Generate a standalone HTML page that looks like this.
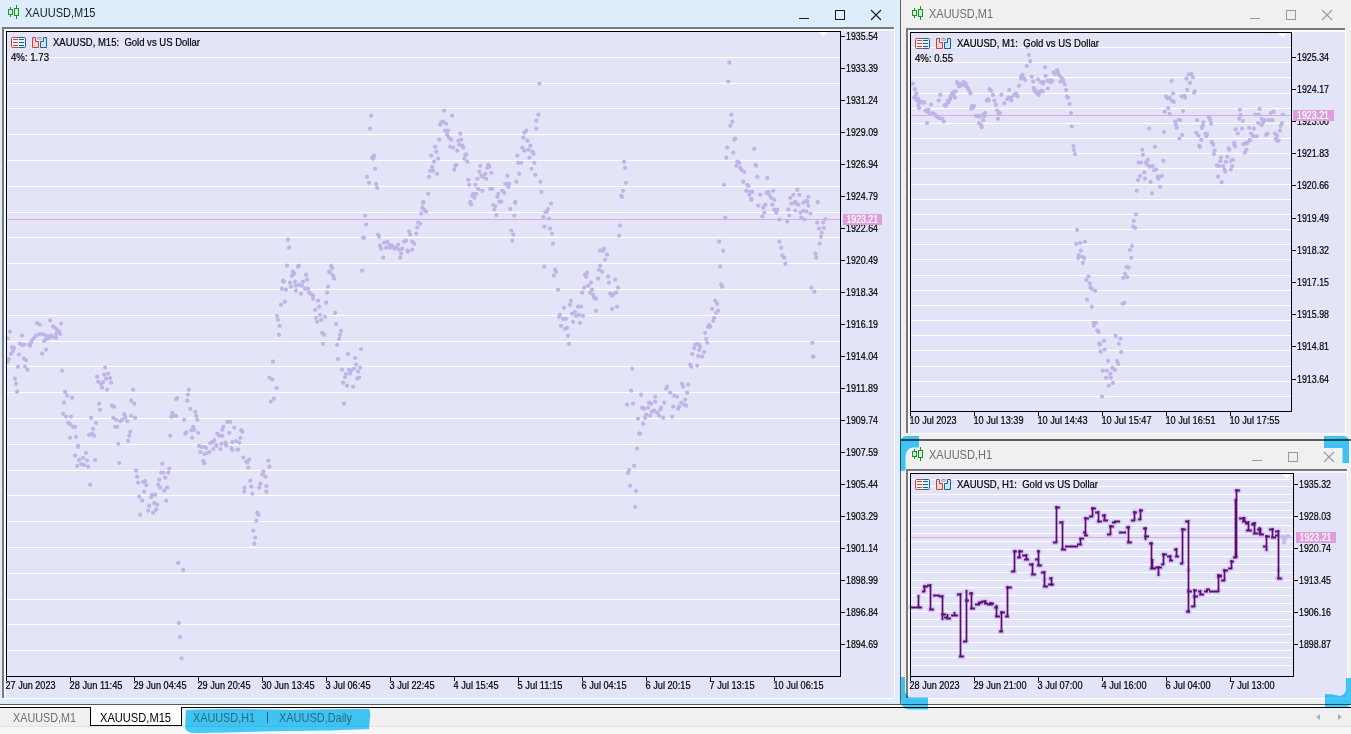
<!DOCTYPE html><html><head><meta charset="utf-8"><style>html,body{margin:0;padding:0;width:1351px;height:734px;overflow:hidden;background:#f0f0f0} svg{display:block} text{font-family:"Liberation Sans",sans-serif}</style></head><body>
<svg width="1351" height="734" viewBox="0 0 1351 734">
<rect x="0" y="0" width="1351" height="734" fill="#f0f0f0" />
<rect x="0" y="0" width="900" height="704" fill="#deedfb" />
<rect x="900" y="0" width="1" height="705" fill="#5c5c5c" />
<rect x="0" y="704" width="901" height="1" fill="#5c5c5c" />
<g shape-rendering="crispEdges">
<rect x="10" y="7" width="1" height="10" fill="#1f8f2f" />
<rect x="8" y="9" width="5" height="6" fill="#1f8f2f" />
<rect x="9" y="10" width="3" height="4" fill="#c9f7c9" />
<rect x="16" y="5" width="1" height="14" fill="#1f8f2f" />
<rect x="14" y="8" width="5" height="8" fill="#1f8f2f" />
<rect x="15" y="9" width="3" height="6" fill="#c9f7c9" />
</g>
<text x="25" y="17" font-size="12" fill="#1a1a2a" textLength="70.5" lengthAdjust="spacingAndGlyphs"  xml:space="preserve">XAUUSD,M15</text>
<g shape-rendering="crispEdges">
<rect x="799" y="18" width="10" height="1" fill="#1a1a1a" />
<rect x="835.5" y="10.5" width="9" height="9" fill="none" stroke="#1a1a1a" stroke-width="1"/>
</g>
<path d="M871 10 L881 20 M881 10 L871 20" stroke="#1a1a1a" stroke-width="1.1" fill="none"/>
<g shape-rendering="crispEdges">
<rect x="2" y="27" width="893" height="672" fill="#ffffff" />
<rect x="2" y="27" width="892" height="2" fill="#7a7a7a" />
<rect x="2" y="27" width="2" height="671" fill="#7a7a7a" />
<rect x="4" y="29" width="890" height="669" fill="#e4e4f8" />
<rect x="4" y="29" width="890" height="2" fill="#f7f7ff" />
<rect x="4" y="29" width="2" height="669" fill="#f7f7ff" />
</g>
<g shape-rendering="crispEdges">
<rect x="7" y="57" width="833" height="1" fill="#ffffff" />
<rect x="7" y="83" width="833" height="1" fill="#ffffff" />
<rect x="7" y="108" width="833" height="1" fill="#ffffff" />
<rect x="7" y="134" width="833" height="1" fill="#ffffff" />
<rect x="7" y="160" width="833" height="1" fill="#ffffff" />
<rect x="7" y="186" width="833" height="1" fill="#ffffff" />
<rect x="7" y="212" width="833" height="1" fill="#ffffff" />
<rect x="7" y="237" width="833" height="1" fill="#ffffff" />
<rect x="7" y="263" width="833" height="1" fill="#ffffff" />
<rect x="7" y="289" width="833" height="1" fill="#ffffff" />
<rect x="7" y="315" width="833" height="1" fill="#ffffff" />
<rect x="7" y="341" width="833" height="1" fill="#ffffff" />
<rect x="7" y="366" width="833" height="1" fill="#ffffff" />
<rect x="7" y="392" width="833" height="1" fill="#ffffff" />
<rect x="7" y="418" width="833" height="1" fill="#ffffff" />
<rect x="7" y="444" width="833" height="1" fill="#ffffff" />
<rect x="7" y="470" width="833" height="1" fill="#ffffff" />
<rect x="7" y="495" width="833" height="1" fill="#ffffff" />
<rect x="7" y="521" width="833" height="1" fill="#ffffff" />
<rect x="7" y="547" width="833" height="1" fill="#ffffff" />
<rect x="7" y="573" width="833" height="1" fill="#ffffff" />
<rect x="7" y="599" width="833" height="1" fill="#ffffff" />
<rect x="7" y="624" width="833" height="1" fill="#ffffff" />
<rect x="7" y="650" width="833" height="1" fill="#ffffff" />
</g>
<rect x="7" y="219" width="833" height="1" fill="#e0a8dc" />
<path d="M819 32 L828 32 L823.5 37 Z" fill="#ffffff" opacity="0.85"/>
<g fill="#bcb5e6">
<circle cx="10.0" cy="331.6" r="2.1"/>
<circle cx="7.6" cy="338.5" r="2.1"/>
<circle cx="22.0" cy="335.6" r="2.1"/>
<circle cx="37.0" cy="323.0" r="2.1"/>
<circle cx="39.6" cy="324.6" r="2.1"/>
<circle cx="50.1" cy="320.6" r="2.1"/>
<circle cx="61.1" cy="323.6" r="2.1"/>
<circle cx="53.1" cy="326.4" r="2.1"/>
<circle cx="55.1" cy="328.0" r="2.1"/>
<circle cx="57.1" cy="330.0" r="2.1"/>
<circle cx="59.1" cy="331.6" r="2.1"/>
<circle cx="60.1" cy="334.0" r="2.1"/>
<circle cx="36.0" cy="335.6" r="2.1"/>
<circle cx="39.0" cy="334.4" r="2.1"/>
<circle cx="42.1" cy="334.0" r="2.1"/>
<circle cx="45.1" cy="335.0" r="2.1"/>
<circle cx="48.1" cy="336.1" r="2.1"/>
<circle cx="51.1" cy="335.6" r="2.1"/>
<circle cx="49.1" cy="338.1" r="2.1"/>
<circle cx="46.1" cy="339.1" r="2.1"/>
<circle cx="44.1" cy="341.1" r="2.1"/>
<circle cx="53.1" cy="337.1" r="2.1"/>
<circle cx="56.1" cy="337.7" r="2.1"/>
<circle cx="56.1" cy="334.0" r="2.1"/>
<circle cx="34.0" cy="338.1" r="2.1"/>
<circle cx="32.0" cy="340.1" r="2.1"/>
<circle cx="31.0" cy="343.1" r="2.1"/>
<circle cx="30.0" cy="345.7" r="2.1"/>
<circle cx="29.0" cy="344.5" r="2.1"/>
<circle cx="20.0" cy="343.7" r="2.1"/>
<circle cx="22.0" cy="345.1" r="2.1"/>
<circle cx="24.0" cy="344.5" r="2.1"/>
<circle cx="12.0" cy="347.1" r="2.1"/>
<circle cx="14.0" cy="348.1" r="2.1"/>
<circle cx="13.0" cy="351.1" r="2.1"/>
<circle cx="11.0" cy="353.7" r="2.1"/>
<circle cx="9.0" cy="359.1" r="2.1"/>
<circle cx="7.6" cy="362.1" r="2.1"/>
<circle cx="19.0" cy="354.5" r="2.1"/>
<circle cx="24.0" cy="358.7" r="2.1"/>
<circle cx="26.0" cy="360.1" r="2.1"/>
<circle cx="42.1" cy="353.7" r="2.1"/>
<circle cx="46.1" cy="349.7" r="2.1"/>
<circle cx="18.0" cy="366.7" r="2.1"/>
<circle cx="25.0" cy="366.7" r="2.1"/>
<circle cx="27.6" cy="369.7" r="2.1"/>
<circle cx="15.0" cy="378.7" r="2.1"/>
<circle cx="16.0" cy="383.7" r="2.1"/>
<circle cx="17.0" cy="391.7" r="2.1"/>
<circle cx="62.1" cy="370.7" r="2.1"/>
<circle cx="65.1" cy="391.7" r="2.1"/>
<circle cx="67.1" cy="395.7" r="2.1"/>
<circle cx="72.1" cy="397.7" r="2.1"/>
<circle cx="64.1" cy="402.7" r="2.1"/>
<circle cx="63.1" cy="413.8" r="2.1"/>
<circle cx="66.1" cy="416.6" r="2.1"/>
<circle cx="71.1" cy="416.6" r="2.1"/>
<circle cx="68.1" cy="422.8" r="2.1"/>
<circle cx="70.1" cy="424.2" r="2.1"/>
<circle cx="73.1" cy="426.8" r="2.1"/>
<circle cx="75.1" cy="426.8" r="2.1"/>
<circle cx="70.1" cy="437.8" r="2.1"/>
<circle cx="76.1" cy="436.8" r="2.1"/>
<circle cx="78.1" cy="445.8" r="2.1"/>
<circle cx="105.1" cy="367.7" r="2.1"/>
<circle cx="97.1" cy="376.7" r="2.1"/>
<circle cx="104.1" cy="374.7" r="2.1"/>
<circle cx="108.1" cy="373.7" r="2.1"/>
<circle cx="106.1" cy="378.7" r="2.1"/>
<circle cx="110.1" cy="378.1" r="2.1"/>
<circle cx="111.1" cy="382.7" r="2.1"/>
<circle cx="98.1" cy="381.7" r="2.1"/>
<circle cx="101.1" cy="384.1" r="2.1"/>
<circle cx="103.1" cy="382.1" r="2.1"/>
<circle cx="102.1" cy="387.7" r="2.1"/>
<circle cx="107.1" cy="389.7" r="2.1"/>
<circle cx="99.1" cy="403.7" r="2.1"/>
<circle cx="100.1" cy="409.8" r="2.1"/>
<circle cx="112.1" cy="405.7" r="2.1"/>
<circle cx="114.2" cy="406.7" r="2.1"/>
<circle cx="133.2" cy="389.7" r="2.1"/>
<circle cx="131.2" cy="400.7" r="2.1"/>
<circle cx="134.2" cy="403.7" r="2.1"/>
<circle cx="91.1" cy="417.8" r="2.1"/>
<circle cx="96.1" cy="422.8" r="2.1"/>
<circle cx="93.1" cy="428.8" r="2.1"/>
<circle cx="89.1" cy="434.8" r="2.1"/>
<circle cx="92.1" cy="433.8" r="2.1"/>
<circle cx="94.1" cy="435.8" r="2.1"/>
<circle cx="113.2" cy="417.8" r="2.1"/>
<circle cx="116.2" cy="419.8" r="2.1"/>
<circle cx="120.2" cy="421.2" r="2.1"/>
<circle cx="122.2" cy="419.8" r="2.1"/>
<circle cx="124.2" cy="414.2" r="2.1"/>
<circle cx="125.2" cy="417.2" r="2.1"/>
<circle cx="127.2" cy="421.2" r="2.1"/>
<circle cx="131.2" cy="415.8" r="2.1"/>
<circle cx="135.2" cy="417.8" r="2.1"/>
<circle cx="115.2" cy="426.8" r="2.1"/>
<circle cx="117.2" cy="426.8" r="2.1"/>
<circle cx="130.2" cy="431.8" r="2.1"/>
<circle cx="129.2" cy="435.8" r="2.1"/>
<circle cx="128.2" cy="440.8" r="2.1"/>
<circle cx="118.2" cy="443.8" r="2.1"/>
<circle cx="176.2" cy="399.1" r="2.1"/>
<circle cx="177.2" cy="398.1" r="2.1"/>
<circle cx="188.7" cy="389.7" r="2.1"/>
<circle cx="187.9" cy="394.7" r="2.1"/>
<circle cx="187.3" cy="400.7" r="2.1"/>
<circle cx="190.3" cy="408.8" r="2.1"/>
<circle cx="172.2" cy="412.8" r="2.1"/>
<circle cx="174.2" cy="415.8" r="2.1"/>
<circle cx="171.2" cy="416.8" r="2.1"/>
<circle cx="176.2" cy="415.8" r="2.1"/>
<circle cx="195.3" cy="411.8" r="2.1"/>
<circle cx="196.3" cy="415.8" r="2.1"/>
<circle cx="197.3" cy="419.8" r="2.1"/>
<circle cx="184.2" cy="419.8" r="2.1"/>
<circle cx="193.3" cy="426.8" r="2.1"/>
<circle cx="191.3" cy="430.2" r="2.1"/>
<circle cx="194.3" cy="429.8" r="2.1"/>
<circle cx="198.3" cy="432.8" r="2.1"/>
<circle cx="185.3" cy="433.8" r="2.1"/>
<circle cx="186.3" cy="432.2" r="2.1"/>
<circle cx="192.3" cy="437.8" r="2.1"/>
<circle cx="170.2" cy="435.8" r="2.1"/>
<circle cx="199.3" cy="445.8" r="2.1"/>
<circle cx="204.3" cy="446.8" r="2.1"/>
<circle cx="212.3" cy="442.2" r="2.1"/>
<circle cx="214.3" cy="440.2" r="2.1"/>
<circle cx="210.3" cy="443.2" r="2.1"/>
<circle cx="216.3" cy="445.2" r="2.1"/>
<circle cx="221.3" cy="443.8" r="2.1"/>
<circle cx="225.3" cy="442.6" r="2.1"/>
<circle cx="226.3" cy="445.2" r="2.1"/>
<circle cx="232.3" cy="442.2" r="2.1"/>
<circle cx="236.3" cy="441.2" r="2.1"/>
<circle cx="239.3" cy="442.6" r="2.1"/>
<circle cx="240.3" cy="437.8" r="2.1"/>
<circle cx="242.3" cy="431.8" r="2.1"/>
<circle cx="241.3" cy="430.2" r="2.1"/>
<circle cx="217.3" cy="433.8" r="2.1"/>
<circle cx="219.3" cy="435.8" r="2.1"/>
<circle cx="222.3" cy="435.8" r="2.1"/>
<circle cx="223.3" cy="426.8" r="2.1"/>
<circle cx="222.3" cy="429.8" r="2.1"/>
<circle cx="227.3" cy="421.8" r="2.1"/>
<circle cx="230.3" cy="421.8" r="2.1"/>
<circle cx="234.3" cy="427.8" r="2.1"/>
<circle cx="229.3" cy="432.8" r="2.1"/>
<circle cx="78.1" cy="447.0" r="2.1"/>
<circle cx="86.1" cy="453.0" r="2.1"/>
<circle cx="75.1" cy="455.6" r="2.1"/>
<circle cx="83.1" cy="458.0" r="2.1"/>
<circle cx="79.1" cy="460.0" r="2.1"/>
<circle cx="87.1" cy="460.6" r="2.1"/>
<circle cx="95.1" cy="460.0" r="2.1"/>
<circle cx="77.1" cy="466.0" r="2.1"/>
<circle cx="81.1" cy="464.0" r="2.1"/>
<circle cx="84.1" cy="465.0" r="2.1"/>
<circle cx="88.1" cy="466.6" r="2.1"/>
<circle cx="90.1" cy="484.7" r="2.1"/>
<circle cx="119.2" cy="463.0" r="2.1"/>
<circle cx="136.2" cy="470.6" r="2.1"/>
<circle cx="137.2" cy="476.7" r="2.1"/>
<circle cx="138.2" cy="482.7" r="2.1"/>
<circle cx="144.2" cy="491.7" r="2.1"/>
<circle cx="143.2" cy="482.1" r="2.1"/>
<circle cx="145.2" cy="481.1" r="2.1"/>
<circle cx="146.2" cy="485.1" r="2.1"/>
<circle cx="139.2" cy="496.7" r="2.1"/>
<circle cx="142.2" cy="500.7" r="2.1"/>
<circle cx="151.2" cy="497.1" r="2.1"/>
<circle cx="152.2" cy="494.5" r="2.1"/>
<circle cx="155.2" cy="494.7" r="2.1"/>
<circle cx="140.2" cy="514.7" r="2.1"/>
<circle cx="148.2" cy="510.7" r="2.1"/>
<circle cx="153.2" cy="512.7" r="2.1"/>
<circle cx="156.2" cy="509.7" r="2.1"/>
<circle cx="149.2" cy="505.7" r="2.1"/>
<circle cx="154.2" cy="503.1" r="2.1"/>
<circle cx="157.2" cy="504.7" r="2.1"/>
<circle cx="162.2" cy="463.6" r="2.1"/>
<circle cx="169.2" cy="468.6" r="2.1"/>
<circle cx="161.2" cy="472.6" r="2.1"/>
<circle cx="163.2" cy="472.6" r="2.1"/>
<circle cx="168.2" cy="472.6" r="2.1"/>
<circle cx="165.2" cy="477.7" r="2.1"/>
<circle cx="159.2" cy="479.7" r="2.1"/>
<circle cx="158.2" cy="484.7" r="2.1"/>
<circle cx="160.2" cy="487.7" r="2.1"/>
<circle cx="164.2" cy="490.7" r="2.1"/>
<circle cx="167.2" cy="487.7" r="2.1"/>
<circle cx="166.2" cy="500.7" r="2.1"/>
<circle cx="199.3" cy="446.0" r="2.1"/>
<circle cx="201.3" cy="447.0" r="2.1"/>
<circle cx="206.3" cy="448.0" r="2.1"/>
<circle cx="200.3" cy="452.0" r="2.1"/>
<circle cx="204.3" cy="454.0" r="2.1"/>
<circle cx="207.3" cy="453.0" r="2.1"/>
<circle cx="209.3" cy="452.0" r="2.1"/>
<circle cx="203.3" cy="461.0" r="2.1"/>
<circle cx="204.3" cy="463.6" r="2.1"/>
<circle cx="213.3" cy="449.0" r="2.1"/>
<circle cx="220.3" cy="449.0" r="2.1"/>
<circle cx="216.3" cy="446.0" r="2.1"/>
<circle cx="226.3" cy="445.6" r="2.1"/>
<circle cx="231.3" cy="448.0" r="2.1"/>
<circle cx="232.3" cy="450.0" r="2.1"/>
<circle cx="237.3" cy="449.6" r="2.1"/>
<circle cx="238.3" cy="449.6" r="2.1"/>
<circle cx="243.3" cy="457.6" r="2.1"/>
<circle cx="246.3" cy="461.6" r="2.1"/>
<circle cx="249.3" cy="459.6" r="2.1"/>
<circle cx="247.3" cy="462.6" r="2.1"/>
<circle cx="248.3" cy="467.6" r="2.1"/>
<circle cx="268.4" cy="460.6" r="2.1"/>
<circle cx="269.4" cy="466.6" r="2.1"/>
<circle cx="263.4" cy="471.6" r="2.1"/>
<circle cx="262.4" cy="474.6" r="2.1"/>
<circle cx="265.4" cy="476.7" r="2.1"/>
<circle cx="250.3" cy="480.7" r="2.1"/>
<circle cx="244.3" cy="487.7" r="2.1"/>
<circle cx="251.3" cy="486.7" r="2.1"/>
<circle cx="244.3" cy="491.7" r="2.1"/>
<circle cx="252.3" cy="493.7" r="2.1"/>
<circle cx="260.4" cy="483.7" r="2.1"/>
<circle cx="259.4" cy="487.7" r="2.1"/>
<circle cx="266.4" cy="486.1" r="2.1"/>
<circle cx="266.4" cy="491.7" r="2.1"/>
<circle cx="257.4" cy="512.7" r="2.1"/>
<circle cx="258.4" cy="514.7" r="2.1"/>
<circle cx="256.4" cy="520.7" r="2.1"/>
<circle cx="253.3" cy="530.7" r="2.1"/>
<circle cx="255.3" cy="537.7" r="2.1"/>
<circle cx="254.3" cy="543.7" r="2.1"/>
<circle cx="178.2" cy="562.8" r="2.1"/>
<circle cx="183.2" cy="569.8" r="2.1"/>
<circle cx="288.0" cy="239.7" r="2.1"/>
<circle cx="289.0" cy="247.7" r="2.1"/>
<circle cx="287.0" cy="265.7" r="2.1"/>
<circle cx="298.0" cy="266.7" r="2.1"/>
<circle cx="299.0" cy="265.7" r="2.1"/>
<circle cx="293.0" cy="271.7" r="2.1"/>
<circle cx="294.0" cy="273.7" r="2.1"/>
<circle cx="292.0" cy="275.7" r="2.1"/>
<circle cx="306.0" cy="274.7" r="2.1"/>
<circle cx="283.0" cy="280.7" r="2.1"/>
<circle cx="284.0" cy="281.7" r="2.1"/>
<circle cx="290.0" cy="282.7" r="2.1"/>
<circle cx="295.0" cy="281.7" r="2.1"/>
<circle cx="303.0" cy="281.7" r="2.1"/>
<circle cx="307.0" cy="279.7" r="2.1"/>
<circle cx="282.0" cy="288.7" r="2.1"/>
<circle cx="286.0" cy="289.7" r="2.1"/>
<circle cx="291.0" cy="286.7" r="2.1"/>
<circle cx="296.0" cy="285.7" r="2.1"/>
<circle cx="299.0" cy="284.7" r="2.1"/>
<circle cx="302.0" cy="285.7" r="2.1"/>
<circle cx="305.0" cy="288.7" r="2.1"/>
<circle cx="308.0" cy="288.7" r="2.1"/>
<circle cx="296.0" cy="290.7" r="2.1"/>
<circle cx="301.0" cy="293.7" r="2.1"/>
<circle cx="309.0" cy="292.7" r="2.1"/>
<circle cx="311.0" cy="294.1" r="2.1"/>
<circle cx="313.1" cy="295.7" r="2.1"/>
<circle cx="313.1" cy="298.7" r="2.1"/>
<circle cx="318.1" cy="300.7" r="2.1"/>
<circle cx="319.1" cy="306.7" r="2.1"/>
<circle cx="315.1" cy="309.8" r="2.1"/>
<circle cx="285.0" cy="301.7" r="2.1"/>
<circle cx="281.0" cy="304.7" r="2.1"/>
<circle cx="331.1" cy="265.7" r="2.1"/>
<circle cx="332.1" cy="268.1" r="2.1"/>
<circle cx="329.1" cy="271.7" r="2.1"/>
<circle cx="330.1" cy="272.7" r="2.1"/>
<circle cx="333.1" cy="275.7" r="2.1"/>
<circle cx="334.1" cy="278.7" r="2.1"/>
<circle cx="328.1" cy="286.7" r="2.1"/>
<circle cx="327.1" cy="292.7" r="2.1"/>
<circle cx="326.1" cy="302.7" r="2.1"/>
<circle cx="335.1" cy="312.8" r="2.1"/>
<circle cx="336.1" cy="323.8" r="2.1"/>
<circle cx="325.1" cy="316.8" r="2.1"/>
<circle cx="320.1" cy="314.8" r="2.1"/>
<circle cx="321.1" cy="319.8" r="2.1"/>
<circle cx="316.1" cy="317.8" r="2.1"/>
<circle cx="317.1" cy="321.8" r="2.1"/>
<circle cx="322.1" cy="332.8" r="2.1"/>
<circle cx="324.1" cy="334.8" r="2.1"/>
<circle cx="323.1" cy="343.8" r="2.1"/>
<circle cx="341.1" cy="330.8" r="2.1"/>
<circle cx="340.1" cy="334.8" r="2.1"/>
<circle cx="339.1" cy="338.8" r="2.1"/>
<circle cx="337.1" cy="344.8" r="2.1"/>
<circle cx="277.0" cy="315.8" r="2.1"/>
<circle cx="278.0" cy="319.8" r="2.1"/>
<circle cx="279.6" cy="325.8" r="2.1"/>
<circle cx="279.0" cy="334.8" r="2.1"/>
<circle cx="362.1" cy="270.7" r="2.1"/>
<circle cx="365.1" cy="215.6" r="2.1"/>
<circle cx="366.1" cy="224.6" r="2.1"/>
<circle cx="363.1" cy="237.7" r="2.1"/>
<circle cx="364.1" cy="237.7" r="2.1"/>
<circle cx="378.1" cy="234.6" r="2.1"/>
<circle cx="379.1" cy="236.7" r="2.1"/>
<circle cx="380.1" cy="245.7" r="2.1"/>
<circle cx="381.1" cy="248.7" r="2.1"/>
<circle cx="384.2" cy="242.7" r="2.1"/>
<circle cx="387.2" cy="241.7" r="2.1"/>
<circle cx="389.2" cy="244.7" r="2.1"/>
<circle cx="386.2" cy="247.7" r="2.1"/>
<circle cx="390.2" cy="247.7" r="2.1"/>
<circle cx="392.2" cy="245.7" r="2.1"/>
<circle cx="394.2" cy="248.7" r="2.1"/>
<circle cx="396.2" cy="247.7" r="2.1"/>
<circle cx="398.2" cy="244.7" r="2.1"/>
<circle cx="399.2" cy="249.7" r="2.1"/>
<circle cx="402.2" cy="248.7" r="2.1"/>
<circle cx="404.2" cy="241.7" r="2.1"/>
<circle cx="406.2" cy="240.7" r="2.1"/>
<circle cx="407.2" cy="250.7" r="2.1"/>
<circle cx="408.2" cy="251.7" r="2.1"/>
<circle cx="401.2" cy="253.7" r="2.1"/>
<circle cx="400.2" cy="257.7" r="2.1"/>
<circle cx="383.2" cy="257.7" r="2.1"/>
<circle cx="412.2" cy="241.7" r="2.1"/>
<circle cx="414.2" cy="243.7" r="2.1"/>
<circle cx="412.2" cy="249.7" r="2.1"/>
<circle cx="409.2" cy="231.6" r="2.1"/>
<circle cx="410.2" cy="234.6" r="2.1"/>
<circle cx="416.2" cy="233.6" r="2.1"/>
<circle cx="417.2" cy="227.6" r="2.1"/>
<circle cx="418.2" cy="222.6" r="2.1"/>
<circle cx="420.2" cy="223.6" r="2.1"/>
<circle cx="421.2" cy="213.6" r="2.1"/>
<circle cx="422.2" cy="207.6" r="2.1"/>
<circle cx="424.2" cy="209.6" r="2.1"/>
<circle cx="426.2" cy="211.6" r="2.1"/>
<circle cx="423.2" cy="203.0" r="2.1"/>
<circle cx="470.3" cy="203.0" r="2.1"/>
<circle cx="471.3" cy="204.6" r="2.1"/>
<circle cx="493.3" cy="205.0" r="2.1"/>
<circle cx="495.3" cy="206.0" r="2.1"/>
<circle cx="494.3" cy="209.6" r="2.1"/>
<circle cx="496.3" cy="215.0" r="2.1"/>
<circle cx="499.3" cy="201.6" r="2.1"/>
<circle cx="501.3" cy="201.6" r="2.1"/>
<circle cx="510.3" cy="209.0" r="2.1"/>
<circle cx="515.3" cy="203.0" r="2.1"/>
<circle cx="514.3" cy="215.6" r="2.1"/>
<circle cx="511.3" cy="230.6" r="2.1"/>
<circle cx="513.3" cy="234.6" r="2.1"/>
<circle cx="512.3" cy="240.7" r="2.1"/>
<circle cx="543.4" cy="217.0" r="2.1"/>
<circle cx="545.4" cy="212.0" r="2.1"/>
<circle cx="544.4" cy="226.6" r="2.1"/>
<circle cx="544.4" cy="266.7" r="2.1"/>
<circle cx="361.1" cy="349.0" r="2.1"/>
<circle cx="348.1" cy="354.0" r="2.1"/>
<circle cx="338.1" cy="359.0" r="2.1"/>
<circle cx="355.1" cy="358.0" r="2.1"/>
<circle cx="356.1" cy="364.6" r="2.1"/>
<circle cx="360.1" cy="367.6" r="2.1"/>
<circle cx="342.1" cy="369.6" r="2.1"/>
<circle cx="349.1" cy="369.6" r="2.1"/>
<circle cx="351.1" cy="370.6" r="2.1"/>
<circle cx="354.1" cy="368.6" r="2.1"/>
<circle cx="358.1" cy="371.6" r="2.1"/>
<circle cx="350.1" cy="373.6" r="2.1"/>
<circle cx="346.1" cy="374.0" r="2.1"/>
<circle cx="345.1" cy="377.0" r="2.1"/>
<circle cx="357.1" cy="378.6" r="2.1"/>
<circle cx="359.1" cy="377.6" r="2.1"/>
<circle cx="343.1" cy="382.6" r="2.1"/>
<circle cx="347.1" cy="385.7" r="2.1"/>
<circle cx="353.1" cy="386.7" r="2.1"/>
<circle cx="344.1" cy="403.7" r="2.1"/>
<circle cx="276.6" cy="388.1" r="2.1"/>
<circle cx="178.9" cy="622.9" r="2.1"/>
<circle cx="179.9" cy="636.9" r="2.1"/>
<circle cx="181.5" cy="658.3" r="2.1"/>
<circle cx="371.1" cy="115.7" r="2.1"/>
<circle cx="370.1" cy="128.7" r="2.1"/>
<circle cx="372.1" cy="157.7" r="2.1"/>
<circle cx="374.1" cy="155.7" r="2.1"/>
<circle cx="373.1" cy="158.7" r="2.1"/>
<circle cx="375.1" cy="168.8" r="2.1"/>
<circle cx="367.1" cy="176.8" r="2.1"/>
<circle cx="369.1" cy="182.8" r="2.1"/>
<circle cx="376.1" cy="183.8" r="2.1"/>
<circle cx="377.1" cy="187.8" r="2.1"/>
<circle cx="444.2" cy="110.7" r="2.1"/>
<circle cx="452.2" cy="115.7" r="2.1"/>
<circle cx="441.2" cy="122.7" r="2.1"/>
<circle cx="443.2" cy="121.7" r="2.1"/>
<circle cx="446.2" cy="123.7" r="2.1"/>
<circle cx="440.2" cy="124.7" r="2.1"/>
<circle cx="445.2" cy="130.7" r="2.1"/>
<circle cx="448.2" cy="130.7" r="2.1"/>
<circle cx="447.2" cy="134.7" r="2.1"/>
<circle cx="449.2" cy="137.7" r="2.1"/>
<circle cx="451.2" cy="139.7" r="2.1"/>
<circle cx="439.2" cy="139.7" r="2.1"/>
<circle cx="435.2" cy="146.7" r="2.1"/>
<circle cx="436.2" cy="151.7" r="2.1"/>
<circle cx="431.2" cy="155.7" r="2.1"/>
<circle cx="434.2" cy="161.7" r="2.1"/>
<circle cx="438.2" cy="158.7" r="2.1"/>
<circle cx="432.2" cy="166.8" r="2.1"/>
<circle cx="430.2" cy="170.8" r="2.1"/>
<circle cx="433.2" cy="170.8" r="2.1"/>
<circle cx="429.2" cy="176.8" r="2.1"/>
<circle cx="437.2" cy="173.8" r="2.1"/>
<circle cx="428.2" cy="193.8" r="2.1"/>
<circle cx="423.2" cy="201.8" r="2.1"/>
<circle cx="450.2" cy="146.7" r="2.1"/>
<circle cx="453.2" cy="147.7" r="2.1"/>
<circle cx="457.3" cy="150.7" r="2.1"/>
<circle cx="460.3" cy="133.7" r="2.1"/>
<circle cx="458.3" cy="140.7" r="2.1"/>
<circle cx="461.3" cy="139.7" r="2.1"/>
<circle cx="459.3" cy="144.7" r="2.1"/>
<circle cx="462.3" cy="145.7" r="2.1"/>
<circle cx="463.3" cy="147.7" r="2.1"/>
<circle cx="465.3" cy="154.7" r="2.1"/>
<circle cx="466.3" cy="154.7" r="2.1"/>
<circle cx="464.3" cy="158.7" r="2.1"/>
<circle cx="467.3" cy="161.7" r="2.1"/>
<circle cx="456.3" cy="164.8" r="2.1"/>
<circle cx="455.3" cy="165.8" r="2.1"/>
<circle cx="454.2" cy="169.8" r="2.1"/>
<circle cx="468.3" cy="179.8" r="2.1"/>
<circle cx="469.3" cy="184.8" r="2.1"/>
<circle cx="475.3" cy="184.8" r="2.1"/>
<circle cx="477.3" cy="178.8" r="2.1"/>
<circle cx="480.3" cy="165.8" r="2.1"/>
<circle cx="479.3" cy="171.8" r="2.1"/>
<circle cx="481.3" cy="175.8" r="2.1"/>
<circle cx="483.3" cy="176.8" r="2.1"/>
<circle cx="485.3" cy="173.8" r="2.1"/>
<circle cx="486.3" cy="178.8" r="2.1"/>
<circle cx="487.3" cy="167.8" r="2.1"/>
<circle cx="488.3" cy="164.8" r="2.1"/>
<circle cx="489.3" cy="166.8" r="2.1"/>
<circle cx="491.3" cy="172.8" r="2.1"/>
<circle cx="478.3" cy="188.8" r="2.1"/>
<circle cx="482.3" cy="190.8" r="2.1"/>
<circle cx="490.3" cy="188.8" r="2.1"/>
<circle cx="492.3" cy="188.8" r="2.1"/>
<circle cx="472.3" cy="195.8" r="2.1"/>
<circle cx="474.3" cy="197.8" r="2.1"/>
<circle cx="476.3" cy="193.8" r="2.1"/>
<circle cx="473.3" cy="193.8" r="2.1"/>
<circle cx="470.3" cy="201.8" r="2.1"/>
<circle cx="497.3" cy="196.8" r="2.1"/>
<circle cx="498.3" cy="193.8" r="2.1"/>
<circle cx="502.3" cy="190.8" r="2.1"/>
<circle cx="504.3" cy="192.8" r="2.1"/>
<circle cx="505.3" cy="183.8" r="2.1"/>
<circle cx="507.3" cy="175.8" r="2.1"/>
<circle cx="508.3" cy="183.8" r="2.1"/>
<circle cx="509.3" cy="183.8" r="2.1"/>
<circle cx="508.3" cy="186.8" r="2.1"/>
<circle cx="500.3" cy="201.8" r="2.1"/>
<circle cx="515.3" cy="201.8" r="2.1"/>
<circle cx="516.3" cy="181.8" r="2.1"/>
<circle cx="519.3" cy="173.8" r="2.1"/>
<circle cx="517.3" cy="155.7" r="2.1"/>
<circle cx="518.3" cy="162.8" r="2.1"/>
<circle cx="521.3" cy="162.8" r="2.1"/>
<circle cx="522.3" cy="147.7" r="2.1"/>
<circle cx="524.3" cy="150.7" r="2.1"/>
<circle cx="523.3" cy="137.7" r="2.1"/>
<circle cx="524.3" cy="132.7" r="2.1"/>
<circle cx="526.4" cy="130.7" r="2.1"/>
<circle cx="527.4" cy="140.7" r="2.1"/>
<circle cx="528.4" cy="149.7" r="2.1"/>
<circle cx="530.4" cy="145.7" r="2.1"/>
<circle cx="532.4" cy="151.7" r="2.1"/>
<circle cx="533.4" cy="153.7" r="2.1"/>
<circle cx="529.4" cy="157.7" r="2.1"/>
<circle cx="534.4" cy="162.8" r="2.1"/>
<circle cx="531.4" cy="168.8" r="2.1"/>
<circle cx="535.4" cy="174.8" r="2.1"/>
<circle cx="540.4" cy="181.8" r="2.1"/>
<circle cx="541.4" cy="191.8" r="2.1"/>
<circle cx="536.4" cy="128.7" r="2.1"/>
<circle cx="536.4" cy="120.7" r="2.1"/>
<circle cx="538.4" cy="114.7" r="2.1"/>
<circle cx="539.4" cy="83.6" r="2.1"/>
<circle cx="624.1" cy="161.7" r="2.1"/>
<circle cx="625.1" cy="167.8" r="2.1"/>
<circle cx="626.1" cy="182.8" r="2.1"/>
<circle cx="623.1" cy="190.8" r="2.1"/>
<circle cx="621.1" cy="195.8" r="2.1"/>
<circle cx="622.1" cy="196.8" r="2.1"/>
<circle cx="729.3" cy="62.6" r="2.1"/>
<circle cx="728.3" cy="81.6" r="2.1"/>
<circle cx="731.3" cy="114.7" r="2.1"/>
<circle cx="732.3" cy="121.7" r="2.1"/>
<circle cx="730.3" cy="125.7" r="2.1"/>
<circle cx="734.3" cy="139.7" r="2.1"/>
<circle cx="735.3" cy="138.7" r="2.1"/>
<circle cx="727.3" cy="147.7" r="2.1"/>
<circle cx="733.3" cy="152.7" r="2.1"/>
<circle cx="726.3" cy="157.7" r="2.1"/>
<circle cx="754.3" cy="148.7" r="2.1"/>
<circle cx="737.3" cy="161.7" r="2.1"/>
<circle cx="739.3" cy="162.8" r="2.1"/>
<circle cx="736.3" cy="165.8" r="2.1"/>
<circle cx="740.3" cy="167.8" r="2.1"/>
<circle cx="741.3" cy="169.8" r="2.1"/>
<circle cx="744.3" cy="171.8" r="2.1"/>
<circle cx="755.3" cy="164.8" r="2.1"/>
<circle cx="756.3" cy="165.8" r="2.1"/>
<circle cx="757.3" cy="176.8" r="2.1"/>
<circle cx="767.3" cy="177.8" r="2.1"/>
<circle cx="743.3" cy="181.8" r="2.1"/>
<circle cx="747.3" cy="184.8" r="2.1"/>
<circle cx="748.3" cy="185.8" r="2.1"/>
<circle cx="724.2" cy="184.8" r="2.1"/>
<circle cx="746.3" cy="190.8" r="2.1"/>
<circle cx="750.3" cy="191.8" r="2.1"/>
<circle cx="752.3" cy="191.8" r="2.1"/>
<circle cx="749.3" cy="194.8" r="2.1"/>
<circle cx="751.3" cy="198.8" r="2.1"/>
<circle cx="760.3" cy="194.8" r="2.1"/>
<circle cx="766.3" cy="192.8" r="2.1"/>
<circle cx="768.3" cy="191.8" r="2.1"/>
<circle cx="769.3" cy="194.8" r="2.1"/>
<circle cx="773.3" cy="190.8" r="2.1"/>
<circle cx="771.3" cy="197.8" r="2.1"/>
<circle cx="774.3" cy="199.8" r="2.1"/>
<circle cx="790.3" cy="197.8" r="2.1"/>
<circle cx="793.3" cy="194.8" r="2.1"/>
<circle cx="797.4" cy="189.8" r="2.1"/>
<circle cx="799.4" cy="194.8" r="2.1"/>
<circle cx="795.3" cy="201.8" r="2.1"/>
<circle cx="808.4" cy="196.8" r="2.1"/>
<circle cx="806.4" cy="200.8" r="2.1"/>
<circle cx="551.0" cy="203.6" r="2.1"/>
<circle cx="548.0" cy="209.0" r="2.1"/>
<circle cx="547.0" cy="211.6" r="2.1"/>
<circle cx="549.0" cy="218.6" r="2.1"/>
<circle cx="550.0" cy="228.6" r="2.1"/>
<circle cx="552.0" cy="233.6" r="2.1"/>
<circle cx="553.0" cy="243.7" r="2.1"/>
<circle cx="555.0" cy="269.7" r="2.1"/>
<circle cx="556.0" cy="271.7" r="2.1"/>
<circle cx="554.0" cy="275.7" r="2.1"/>
<circle cx="558.0" cy="289.7" r="2.1"/>
<circle cx="620.1" cy="225.6" r="2.1"/>
<circle cx="619.1" cy="235.6" r="2.1"/>
<circle cx="600.1" cy="250.7" r="2.1"/>
<circle cx="604.1" cy="248.7" r="2.1"/>
<circle cx="603.1" cy="250.7" r="2.1"/>
<circle cx="607.1" cy="254.7" r="2.1"/>
<circle cx="605.1" cy="259.7" r="2.1"/>
<circle cx="600.1" cy="265.7" r="2.1"/>
<circle cx="599.1" cy="269.7" r="2.1"/>
<circle cx="602.1" cy="271.7" r="2.1"/>
<circle cx="598.1" cy="278.7" r="2.1"/>
<circle cx="608.1" cy="276.7" r="2.1"/>
<circle cx="609.1" cy="282.7" r="2.1"/>
<circle cx="615.1" cy="279.7" r="2.1"/>
<circle cx="618.1" cy="287.7" r="2.1"/>
<circle cx="610.1" cy="293.7" r="2.1"/>
<circle cx="612.1" cy="295.7" r="2.1"/>
<circle cx="614.1" cy="293.7" r="2.1"/>
<circle cx="616.1" cy="292.7" r="2.1"/>
<circle cx="612.1" cy="308.8" r="2.1"/>
<circle cx="617.1" cy="306.7" r="2.1"/>
<circle cx="596.1" cy="310.8" r="2.1"/>
<circle cx="585.1" cy="274.7" r="2.1"/>
<circle cx="587.1" cy="272.7" r="2.1"/>
<circle cx="586.1" cy="276.7" r="2.1"/>
<circle cx="591.1" cy="282.7" r="2.1"/>
<circle cx="588.1" cy="285.7" r="2.1"/>
<circle cx="584.1" cy="287.7" r="2.1"/>
<circle cx="582.1" cy="292.7" r="2.1"/>
<circle cx="592.1" cy="289.7" r="2.1"/>
<circle cx="590.1" cy="292.7" r="2.1"/>
<circle cx="593.1" cy="294.7" r="2.1"/>
<circle cx="594.1" cy="297.7" r="2.1"/>
<circle cx="596.1" cy="298.7" r="2.1"/>
<circle cx="571.0" cy="300.7" r="2.1"/>
<circle cx="570.0" cy="304.7" r="2.1"/>
<circle cx="564.0" cy="307.8" r="2.1"/>
<circle cx="578.0" cy="306.7" r="2.1"/>
<circle cx="581.0" cy="306.7" r="2.1"/>
<circle cx="572.0" cy="313.8" r="2.1"/>
<circle cx="575.0" cy="311.8" r="2.1"/>
<circle cx="576.0" cy="315.8" r="2.1"/>
<circle cx="579.0" cy="314.8" r="2.1"/>
<circle cx="583.1" cy="315.8" r="2.1"/>
<circle cx="560.0" cy="314.8" r="2.1"/>
<circle cx="559.0" cy="316.8" r="2.1"/>
<circle cx="563.0" cy="318.8" r="2.1"/>
<circle cx="566.0" cy="318.8" r="2.1"/>
<circle cx="573.0" cy="321.8" r="2.1"/>
<circle cx="580.0" cy="322.8" r="2.1"/>
<circle cx="561.0" cy="325.8" r="2.1"/>
<circle cx="565.0" cy="328.8" r="2.1"/>
<circle cx="567.0" cy="327.8" r="2.1"/>
<circle cx="568.0" cy="335.8" r="2.1"/>
<circle cx="569.0" cy="343.8" r="2.1"/>
<circle cx="725.3" cy="217.6" r="2.1"/>
<circle cx="719.2" cy="241.7" r="2.1"/>
<circle cx="723.2" cy="250.7" r="2.1"/>
<circle cx="720.2" cy="266.7" r="2.1"/>
<circle cx="721.2" cy="284.7" r="2.1"/>
<circle cx="722.2" cy="286.7" r="2.1"/>
<circle cx="715.2" cy="300.7" r="2.1"/>
<circle cx="717.2" cy="303.7" r="2.1"/>
<circle cx="712.2" cy="308.8" r="2.1"/>
<circle cx="718.2" cy="310.8" r="2.1"/>
<circle cx="716.2" cy="312.8" r="2.1"/>
<circle cx="714.2" cy="317.8" r="2.1"/>
<circle cx="713.2" cy="320.8" r="2.1"/>
<circle cx="709.2" cy="324.8" r="2.1"/>
<circle cx="710.2" cy="326.8" r="2.1"/>
<circle cx="708.2" cy="326.8" r="2.1"/>
<circle cx="705.2" cy="332.8" r="2.1"/>
<circle cx="706.2" cy="338.8" r="2.1"/>
<circle cx="707.2" cy="342.8" r="2.1"/>
<circle cx="697.2" cy="343.8" r="2.1"/>
<circle cx="695.2" cy="344.8" r="2.1"/>
<circle cx="699.2" cy="344.8" r="2.1"/>
<circle cx="751.3" cy="200.0" r="2.1"/>
<circle cx="758.3" cy="205.6" r="2.1"/>
<circle cx="763.3" cy="207.6" r="2.1"/>
<circle cx="765.3" cy="204.6" r="2.1"/>
<circle cx="764.3" cy="212.6" r="2.1"/>
<circle cx="762.3" cy="216.6" r="2.1"/>
<circle cx="772.3" cy="204.6" r="2.1"/>
<circle cx="774.3" cy="209.6" r="2.1"/>
<circle cx="777.3" cy="209.6" r="2.1"/>
<circle cx="776.3" cy="212.6" r="2.1"/>
<circle cx="779.3" cy="219.6" r="2.1"/>
<circle cx="788.3" cy="209.6" r="2.1"/>
<circle cx="789.3" cy="215.6" r="2.1"/>
<circle cx="787.3" cy="221.6" r="2.1"/>
<circle cx="791.3" cy="203.6" r="2.1"/>
<circle cx="794.3" cy="202.6" r="2.1"/>
<circle cx="796.4" cy="203.6" r="2.1"/>
<circle cx="798.4" cy="204.6" r="2.1"/>
<circle cx="795.3" cy="210.6" r="2.1"/>
<circle cx="803.4" cy="202.6" r="2.1"/>
<circle cx="807.4" cy="201.6" r="2.1"/>
<circle cx="808.4" cy="205.6" r="2.1"/>
<circle cx="800.4" cy="212.6" r="2.1"/>
<circle cx="803.4" cy="210.6" r="2.1"/>
<circle cx="806.4" cy="211.6" r="2.1"/>
<circle cx="810.4" cy="213.6" r="2.1"/>
<circle cx="801.4" cy="217.6" r="2.1"/>
<circle cx="804.4" cy="219.6" r="2.1"/>
<circle cx="779.3" cy="241.7" r="2.1"/>
<circle cx="781.3" cy="247.7" r="2.1"/>
<circle cx="782.3" cy="255.7" r="2.1"/>
<circle cx="784.3" cy="257.7" r="2.1"/>
<circle cx="785.3" cy="263.7" r="2.1"/>
<circle cx="815.4" cy="253.7" r="2.1"/>
<circle cx="811.4" cy="287.7" r="2.1"/>
<circle cx="814.4" cy="291.7" r="2.1"/>
<circle cx="812.4" cy="342.8" r="2.1"/>
<circle cx="694.2" cy="348.0" r="2.1"/>
<circle cx="700.2" cy="347.0" r="2.1"/>
<circle cx="699.2" cy="350.0" r="2.1"/>
<circle cx="704.2" cy="352.0" r="2.1"/>
<circle cx="692.2" cy="354.0" r="2.1"/>
<circle cx="698.2" cy="356.0" r="2.1"/>
<circle cx="702.2" cy="356.6" r="2.1"/>
<circle cx="690.2" cy="364.6" r="2.1"/>
<circle cx="691.2" cy="366.6" r="2.1"/>
<circle cx="697.2" cy="365.6" r="2.1"/>
<circle cx="813.4" cy="356.6" r="2.1"/>
<circle cx="632.1" cy="368.6" r="2.1"/>
<circle cx="631.1" cy="390.7" r="2.1"/>
<circle cx="627.1" cy="404.7" r="2.1"/>
<circle cx="633.1" cy="403.7" r="2.1"/>
<circle cx="641.1" cy="394.7" r="2.1"/>
<circle cx="655.2" cy="396.7" r="2.1"/>
<circle cx="666.2" cy="388.7" r="2.1"/>
<circle cx="667.2" cy="386.7" r="2.1"/>
<circle cx="670.2" cy="392.7" r="2.1"/>
<circle cx="674.2" cy="395.7" r="2.1"/>
<circle cx="677.2" cy="396.7" r="2.1"/>
<circle cx="682.2" cy="383.7" r="2.1"/>
<circle cx="683.2" cy="386.7" r="2.1"/>
<circle cx="688.2" cy="384.7" r="2.1"/>
<circle cx="687.2" cy="392.7" r="2.1"/>
<circle cx="685.2" cy="399.7" r="2.1"/>
<circle cx="681.2" cy="402.7" r="2.1"/>
<circle cx="684.2" cy="404.7" r="2.1"/>
<circle cx="686.2" cy="405.7" r="2.1"/>
<circle cx="678.2" cy="408.7" r="2.1"/>
<circle cx="673.2" cy="406.7" r="2.1"/>
<circle cx="679.2" cy="406.7" r="2.1"/>
<circle cx="664.2" cy="402.7" r="2.1"/>
<circle cx="661.2" cy="407.7" r="2.1"/>
<circle cx="660.2" cy="409.7" r="2.1"/>
<circle cx="657.2" cy="412.7" r="2.1"/>
<circle cx="654.2" cy="410.7" r="2.1"/>
<circle cx="652.1" cy="411.7" r="2.1"/>
<circle cx="649.1" cy="402.7" r="2.1"/>
<circle cx="651.1" cy="403.7" r="2.1"/>
<circle cx="655.2" cy="401.7" r="2.1"/>
<circle cx="648.1" cy="407.7" r="2.1"/>
<circle cx="642.1" cy="407.7" r="2.1"/>
<circle cx="644.1" cy="408.7" r="2.1"/>
<circle cx="646.1" cy="414.7" r="2.1"/>
<circle cx="645.1" cy="417.7" r="2.1"/>
<circle cx="650.1" cy="415.7" r="2.1"/>
<circle cx="659.2" cy="415.7" r="2.1"/>
<circle cx="663.2" cy="417.7" r="2.1"/>
<circle cx="672.2" cy="416.7" r="2.1"/>
<circle cx="638.1" cy="418.7" r="2.1"/>
<circle cx="643.1" cy="423.7" r="2.1"/>
<circle cx="639.1" cy="433.7" r="2.1"/>
<circle cx="640.1" cy="433.7" r="2.1"/>
<circle cx="637.1" cy="448.7" r="2.1"/>
<circle cx="634.1" cy="465.8" r="2.1"/>
<circle cx="629.1" cy="469.8" r="2.1"/>
<circle cx="628.1" cy="472.8" r="2.1"/>
<circle cx="630.1" cy="485.8" r="2.1"/>
<circle cx="636.1" cy="490.8" r="2.1"/>
<circle cx="635.1" cy="507.0" r="2.1"/>
<circle cx="817.7" cy="202.2" r="2.1"/>
<circle cx="817.1" cy="222.6" r="2.1"/>
<circle cx="819.0" cy="228.6" r="2.1"/>
<circle cx="823.1" cy="222.6" r="2.1"/>
<circle cx="825.3" cy="219.0" r="2.1"/>
<circle cx="823.9" cy="227.8" r="2.1"/>
<circle cx="821.7" cy="232.7" r="2.1"/>
<circle cx="820.9" cy="236.8" r="2.1"/>
<circle cx="819.8" cy="243.6" r="2.1"/>
<circle cx="816.3" cy="257.7" r="2.1"/>
<circle cx="813.0" cy="356.6" r="2.1"/>
<circle cx="273.0" cy="361.7" r="2.1"/>
<circle cx="269.4" cy="377.7" r="2.1"/>
<circle cx="272.4" cy="379.7" r="2.1"/>
<circle cx="274.0" cy="398.7" r="2.1"/>
<circle cx="270.8" cy="401.7" r="2.1"/>
</g>
<g shape-rendering="crispEdges">
<rect x="6" y="31" width="835" height="1" fill="#000" />
<rect x="6" y="676" width="835" height="1" fill="#000" />
<rect x="6" y="31" width="1" height="646" fill="#000" />
<rect x="840" y="31" width="1" height="646" fill="#000" />
</g>
<g shape-rendering="crispEdges">
<rect x="841" y="36" width="4" height="1" fill="#000" />
<rect x="841" y="68" width="4" height="1" fill="#000" />
<rect x="841" y="100" width="4" height="1" fill="#000" />
<rect x="841" y="132" width="4" height="1" fill="#000" />
<rect x="841" y="164" width="4" height="1" fill="#000" />
<rect x="841" y="196" width="4" height="1" fill="#000" />
<rect x="841" y="228" width="4" height="1" fill="#000" />
<rect x="841" y="260" width="4" height="1" fill="#000" />
<rect x="841" y="292" width="4" height="1" fill="#000" />
<rect x="841" y="324" width="4" height="1" fill="#000" />
<rect x="841" y="356" width="4" height="1" fill="#000" />
<rect x="841" y="388" width="4" height="1" fill="#000" />
<rect x="841" y="420" width="4" height="1" fill="#000" />
<rect x="841" y="452" width="4" height="1" fill="#000" />
<rect x="841" y="484" width="4" height="1" fill="#000" />
<rect x="841" y="516" width="4" height="1" fill="#000" />
<rect x="841" y="548" width="4" height="1" fill="#000" />
<rect x="841" y="580" width="4" height="1" fill="#000" />
<rect x="841" y="612" width="4" height="1" fill="#000" />
<rect x="841" y="644" width="4" height="1" fill="#000" />
</g>
<text x="846" y="40" font-size="10.3" fill="#000" textLength="32" lengthAdjust="spacingAndGlyphs"  stroke="#000" stroke-width="0.2" xml:space="preserve">1935.54</text>
<text x="846" y="72" font-size="10.3" fill="#000" textLength="32" lengthAdjust="spacingAndGlyphs"  stroke="#000" stroke-width="0.2" xml:space="preserve">1933.39</text>
<text x="846" y="104" font-size="10.3" fill="#000" textLength="32" lengthAdjust="spacingAndGlyphs"  stroke="#000" stroke-width="0.2" xml:space="preserve">1931.24</text>
<text x="846" y="136" font-size="10.3" fill="#000" textLength="32" lengthAdjust="spacingAndGlyphs"  stroke="#000" stroke-width="0.2" xml:space="preserve">1929.09</text>
<text x="846" y="168" font-size="10.3" fill="#000" textLength="32" lengthAdjust="spacingAndGlyphs"  stroke="#000" stroke-width="0.2" xml:space="preserve">1926.94</text>
<text x="846" y="200" font-size="10.3" fill="#000" textLength="32" lengthAdjust="spacingAndGlyphs"  stroke="#000" stroke-width="0.2" xml:space="preserve">1924.79</text>
<text x="846" y="232" font-size="10.3" fill="#000" textLength="32" lengthAdjust="spacingAndGlyphs"  stroke="#000" stroke-width="0.2" xml:space="preserve">1922.64</text>
<text x="846" y="264" font-size="10.3" fill="#000" textLength="32" lengthAdjust="spacingAndGlyphs"  stroke="#000" stroke-width="0.2" xml:space="preserve">1920.49</text>
<text x="846" y="296" font-size="10.3" fill="#000" textLength="32" lengthAdjust="spacingAndGlyphs"  stroke="#000" stroke-width="0.2" xml:space="preserve">1918.34</text>
<text x="846" y="328" font-size="10.3" fill="#000" textLength="32" lengthAdjust="spacingAndGlyphs"  stroke="#000" stroke-width="0.2" xml:space="preserve">1916.19</text>
<text x="846" y="360" font-size="10.3" fill="#000" textLength="32" lengthAdjust="spacingAndGlyphs"  stroke="#000" stroke-width="0.2" xml:space="preserve">1914.04</text>
<text x="846" y="392" font-size="10.3" fill="#000" textLength="32" lengthAdjust="spacingAndGlyphs"  stroke="#000" stroke-width="0.2" xml:space="preserve">1911.89</text>
<text x="846" y="424" font-size="10.3" fill="#000" textLength="32" lengthAdjust="spacingAndGlyphs"  stroke="#000" stroke-width="0.2" xml:space="preserve">1909.74</text>
<text x="846" y="456" font-size="10.3" fill="#000" textLength="32" lengthAdjust="spacingAndGlyphs"  stroke="#000" stroke-width="0.2" xml:space="preserve">1907.59</text>
<text x="846" y="488" font-size="10.3" fill="#000" textLength="32" lengthAdjust="spacingAndGlyphs"  stroke="#000" stroke-width="0.2" xml:space="preserve">1905.44</text>
<text x="846" y="520" font-size="10.3" fill="#000" textLength="32" lengthAdjust="spacingAndGlyphs"  stroke="#000" stroke-width="0.2" xml:space="preserve">1903.29</text>
<text x="846" y="552" font-size="10.3" fill="#000" textLength="32" lengthAdjust="spacingAndGlyphs"  stroke="#000" stroke-width="0.2" xml:space="preserve">1901.14</text>
<text x="846" y="584" font-size="10.3" fill="#000" textLength="32" lengthAdjust="spacingAndGlyphs"  stroke="#000" stroke-width="0.2" xml:space="preserve">1898.99</text>
<text x="846" y="616" font-size="10.3" fill="#000" textLength="32" lengthAdjust="spacingAndGlyphs"  stroke="#000" stroke-width="0.2" xml:space="preserve">1896.84</text>
<text x="846" y="648" font-size="10.3" fill="#000" textLength="32" lengthAdjust="spacingAndGlyphs"  stroke="#000" stroke-width="0.2" xml:space="preserve">1894.69</text>
<rect x="843" y="214" width="39" height="11" fill="#dda0dd" />
<text x="846.5" y="223" font-size="10.3" fill="#ffffff" textLength="31.5" lengthAdjust="spacingAndGlyphs"  stroke="#ffffff" stroke-width="0.2" xml:space="preserve">1923.21</text>
<g shape-rendering="crispEdges">
<rect x="6" y="677" width="1" height="4" fill="#000" />
<rect x="70" y="677" width="1" height="4" fill="#000" />
<rect x="134" y="677" width="1" height="4" fill="#000" />
<rect x="198" y="677" width="1" height="4" fill="#000" />
<rect x="262" y="677" width="1" height="4" fill="#000" />
<rect x="326" y="677" width="1" height="4" fill="#000" />
<rect x="390" y="677" width="1" height="4" fill="#000" />
<rect x="454" y="677" width="1" height="4" fill="#000" />
<rect x="518" y="677" width="1" height="4" fill="#000" />
<rect x="582" y="677" width="1" height="4" fill="#000" />
<rect x="646" y="677" width="1" height="4" fill="#000" />
<rect x="710" y="677" width="1" height="4" fill="#000" />
<rect x="774" y="677" width="1" height="4" fill="#000" />
</g>
<text x="5.5" y="689" font-size="10.3" fill="#000" textLength="50" lengthAdjust="spacingAndGlyphs"  stroke="#000" stroke-width="0.2" xml:space="preserve">27 Jun 2023</text>
<text x="69.5" y="689" font-size="10.3" fill="#000" textLength="53" lengthAdjust="spacingAndGlyphs"  stroke="#000" stroke-width="0.2" xml:space="preserve">28 Jun 11:45</text>
<text x="133.5" y="689" font-size="10.3" fill="#000" textLength="53" lengthAdjust="spacingAndGlyphs"  stroke="#000" stroke-width="0.2" xml:space="preserve">29 Jun 04:45</text>
<text x="197.5" y="689" font-size="10.3" fill="#000" textLength="53" lengthAdjust="spacingAndGlyphs"  stroke="#000" stroke-width="0.2" xml:space="preserve">29 Jun 20:45</text>
<text x="261.5" y="689" font-size="10.3" fill="#000" textLength="53" lengthAdjust="spacingAndGlyphs"  stroke="#000" stroke-width="0.2" xml:space="preserve">30 Jun 13:45</text>
<text x="325.5" y="689" font-size="10.3" fill="#000" textLength="45" lengthAdjust="spacingAndGlyphs"  stroke="#000" stroke-width="0.2" xml:space="preserve">3 Jul 06:45</text>
<text x="389.5" y="689" font-size="10.3" fill="#000" textLength="45" lengthAdjust="spacingAndGlyphs"  stroke="#000" stroke-width="0.2" xml:space="preserve">3 Jul 22:45</text>
<text x="453.5" y="689" font-size="10.3" fill="#000" textLength="45" lengthAdjust="spacingAndGlyphs"  stroke="#000" stroke-width="0.2" xml:space="preserve">4 Jul 15:45</text>
<text x="517.5" y="689" font-size="10.3" fill="#000" textLength="45" lengthAdjust="spacingAndGlyphs"  stroke="#000" stroke-width="0.2" xml:space="preserve">5 Jul 11:15</text>
<text x="581.5" y="689" font-size="10.3" fill="#000" textLength="45" lengthAdjust="spacingAndGlyphs"  stroke="#000" stroke-width="0.2" xml:space="preserve">6 Jul 04:15</text>
<text x="645.5" y="689" font-size="10.3" fill="#000" textLength="45" lengthAdjust="spacingAndGlyphs"  stroke="#000" stroke-width="0.2" xml:space="preserve">6 Jul 20:15</text>
<text x="709.5" y="689" font-size="10.3" fill="#000" textLength="45" lengthAdjust="spacingAndGlyphs"  stroke="#000" stroke-width="0.2" xml:space="preserve">7 Jul 13:15</text>
<text x="773.5" y="689" font-size="10.3" fill="#000" textLength="50" lengthAdjust="spacingAndGlyphs"  stroke="#000" stroke-width="0.2" xml:space="preserve">10 Jul 06:15</text>
<g shape-rendering="crispEdges">
<rect x="12" y="38" width="7" height="9" fill="#fff1ea" />
<rect x="19" y="38" width="6" height="9" fill="#d9f5ff" />
</g>
<path d="M18.5 37.5 H12.5 Q11.5 37.5 11.5 38.5 V46.5 Q11.5 47.5 12.5 47.5 H18.5" stroke="#b5484a" fill="none"/>
<path d="M18.5 37.5 H24.5 Q25.5 37.5 25.5 38.5 V46.5 Q25.5 47.5 24.5 47.5 H18.5" stroke="#2a5d8c" fill="none"/>
<g shape-rendering="crispEdges">
<rect x="13" y="39" width="5" height="1" fill="#b5484a" />
<rect x="19" y="39" width="5" height="1" fill="#2a5d8c" />
<rect x="13" y="42" width="5" height="1" fill="#b5484a" />
<rect x="19" y="42" width="5" height="1" fill="#2a5d8c" />
<rect x="13" y="45" width="5" height="1" fill="#b5484a" />
<rect x="19" y="45" width="5" height="1" fill="#2a5d8c" />
</g>
<path d="M32.5 37.5 H35.5 V41.5 H38.5 V47.5 H32.5 Z" stroke="#b5484a" fill="#ffd3c9" stroke-linejoin="round"/>
<path d="M46.5 37.5 H43.5 V41.5 H40.5 V47.5 H46.5 Z" stroke="#2a5d8c" fill="#bfeafc" stroke-linejoin="round"/>
<rect x="37.5" y="37.5" width="4" height="1.6" rx="0.8" stroke="#8a8a8a" stroke-width="0.9" fill="#ffffff"/>
<text x="53" y="46" font-size="10.3" fill="#000" textLength="147" lengthAdjust="spacingAndGlyphs"  stroke="#000" stroke-width="0.2" xml:space="preserve">XAUUSD, M15:  Gold vs US Dollar</text>
<text x="11" y="61" font-size="10.3" fill="#000" textLength="38" lengthAdjust="spacingAndGlyphs"  stroke="#000" stroke-width="0.2" xml:space="preserve">4%: 1.73</text>
<rect x="901" y="0" width="450" height="439" fill="#f0f0f0" />
<g shape-rendering="crispEdges">
<rect x="914" y="8" width="1" height="10" fill="#1f8f2f" />
<rect x="912" y="10" width="5" height="6" fill="#1f8f2f" />
<rect x="913" y="11" width="3" height="4" fill="#c9f7c9" />
<rect x="920" y="6" width="1" height="14" fill="#1f8f2f" />
<rect x="918" y="9" width="5" height="8" fill="#1f8f2f" />
<rect x="919" y="10" width="3" height="6" fill="#c9f7c9" />
</g>
<text x="929" y="18" font-size="12" fill="#6e6e6e" textLength="64" lengthAdjust="spacingAndGlyphs"  xml:space="preserve">XAUUSD,M1</text>
<g shape-rendering="crispEdges">
<rect x="1250" y="18" width="10" height="1" fill="#9a9a9a" />
<rect x="1286.5" y="10.5" width="9" height="9" fill="none" stroke="#9a9a9a" stroke-width="1"/>
</g>
<path d="M1322 10 L1332 20 M1332 10 L1322 20" stroke="#9a9a9a" stroke-width="1.1" fill="none"/>
<g shape-rendering="crispEdges">
<rect x="906" y="28" width="440" height="406" fill="#ffffff" />
<rect x="906" y="28" width="439" height="2" fill="#7a7a7a" />
<rect x="906" y="28" width="2" height="405" fill="#7a7a7a" />
<rect x="908" y="30" width="437" height="403" fill="#e4e4f8" />
<rect x="908" y="30" width="437" height="2" fill="#f7f7ff" />
<rect x="908" y="30" width="2" height="403" fill="#f7f7ff" />
</g>
<g shape-rendering="crispEdges">
<rect x="911" y="47" width="380" height="1" fill="#ffffff" />
<rect x="911" y="62" width="380" height="1" fill="#ffffff" />
<rect x="911" y="77" width="380" height="1" fill="#ffffff" />
<rect x="911" y="93" width="380" height="1" fill="#ffffff" />
<rect x="911" y="108" width="380" height="1" fill="#ffffff" />
<rect x="911" y="123" width="380" height="1" fill="#ffffff" />
<rect x="911" y="138" width="380" height="1" fill="#ffffff" />
<rect x="911" y="153" width="380" height="1" fill="#ffffff" />
<rect x="911" y="168" width="380" height="1" fill="#ffffff" />
<rect x="911" y="184" width="380" height="1" fill="#ffffff" />
<rect x="911" y="199" width="380" height="1" fill="#ffffff" />
<rect x="911" y="214" width="380" height="1" fill="#ffffff" />
<rect x="911" y="229" width="380" height="1" fill="#ffffff" />
<rect x="911" y="244" width="380" height="1" fill="#ffffff" />
<rect x="911" y="259" width="380" height="1" fill="#ffffff" />
<rect x="911" y="275" width="380" height="1" fill="#ffffff" />
<rect x="911" y="290" width="380" height="1" fill="#ffffff" />
<rect x="911" y="305" width="380" height="1" fill="#ffffff" />
<rect x="911" y="320" width="380" height="1" fill="#ffffff" />
<rect x="911" y="335" width="380" height="1" fill="#ffffff" />
<rect x="911" y="350" width="380" height="1" fill="#ffffff" />
<rect x="911" y="366" width="380" height="1" fill="#ffffff" />
<rect x="911" y="381" width="380" height="1" fill="#ffffff" />
<rect x="911" y="396" width="380" height="1" fill="#ffffff" />
</g>
<rect x="911" y="115" width="380" height="1" fill="#e0a8dc" />
<path d="M1278 33 L1287 33 L1282.5 38 Z" fill="#ffffff" opacity="0.85"/>
<g fill="#bcb5e6">
<circle cx="912.8" cy="83.6" r="2.1"/>
<circle cx="914.9" cy="89.2" r="2.1"/>
<circle cx="916.3" cy="93.4" r="2.1"/>
<circle cx="914.2" cy="97.7" r="2.1"/>
<circle cx="917.0" cy="100.5" r="2.1"/>
<circle cx="919.8" cy="101.9" r="2.1"/>
<circle cx="922.7" cy="101.9" r="2.1"/>
<circle cx="924.1" cy="102.6" r="2.1"/>
<circle cx="918.4" cy="104.7" r="2.1"/>
<circle cx="919.1" cy="108.2" r="2.1"/>
<circle cx="931.1" cy="104.7" r="2.1"/>
<circle cx="925.5" cy="110.3" r="2.1"/>
<circle cx="928.3" cy="109.6" r="2.1"/>
<circle cx="929.7" cy="113.1" r="2.1"/>
<circle cx="933.2" cy="113.1" r="2.1"/>
<circle cx="936.0" cy="115.9" r="2.1"/>
<circle cx="938.1" cy="117.4" r="2.1"/>
<circle cx="942.3" cy="118.8" r="2.1"/>
<circle cx="943.8" cy="121.6" r="2.1"/>
<circle cx="926.9" cy="123.0" r="2.1"/>
<circle cx="940.2" cy="94.9" r="2.1"/>
<circle cx="938.8" cy="100.5" r="2.1"/>
<circle cx="944.5" cy="105.4" r="2.1"/>
<circle cx="946.6" cy="104.0" r="2.1"/>
<circle cx="948.0" cy="100.5" r="2.1"/>
<circle cx="950.1" cy="99.1" r="2.1"/>
<circle cx="952.2" cy="93.4" r="2.1"/>
<circle cx="953.6" cy="92.0" r="2.1"/>
<circle cx="955.7" cy="91.3" r="2.1"/>
<circle cx="955.0" cy="97.7" r="2.1"/>
<circle cx="957.1" cy="82.2" r="2.1"/>
<circle cx="959.2" cy="86.4" r="2.1"/>
<circle cx="961.3" cy="85.0" r="2.1"/>
<circle cx="963.4" cy="82.2" r="2.1"/>
<circle cx="965.6" cy="83.6" r="2.1"/>
<circle cx="967.7" cy="87.8" r="2.1"/>
<circle cx="969.1" cy="90.6" r="2.1"/>
<circle cx="970.5" cy="93.4" r="2.1"/>
<circle cx="971.9" cy="106.1" r="2.1"/>
<circle cx="973.3" cy="107.5" r="2.1"/>
<circle cx="971.2" cy="108.9" r="2.1"/>
<circle cx="976.1" cy="115.9" r="2.1"/>
<circle cx="978.9" cy="116.7" r="2.1"/>
<circle cx="980.3" cy="115.9" r="2.1"/>
<circle cx="983.1" cy="114.5" r="2.1"/>
<circle cx="985.2" cy="113.1" r="2.1"/>
<circle cx="983.1" cy="120.2" r="2.1"/>
<circle cx="978.9" cy="123.0" r="2.1"/>
<circle cx="981.0" cy="125.1" r="2.1"/>
<circle cx="981.7" cy="127.2" r="2.1"/>
<circle cx="986.7" cy="100.5" r="2.1"/>
<circle cx="988.1" cy="99.1" r="2.1"/>
<circle cx="989.5" cy="89.2" r="2.1"/>
<circle cx="990.9" cy="90.6" r="2.1"/>
<circle cx="993.0" cy="94.9" r="2.1"/>
<circle cx="994.4" cy="100.5" r="2.1"/>
<circle cx="995.8" cy="104.7" r="2.1"/>
<circle cx="997.2" cy="110.3" r="2.1"/>
<circle cx="998.6" cy="113.1" r="2.1"/>
<circle cx="1000.0" cy="113.1" r="2.1"/>
<circle cx="997.9" cy="118.8" r="2.1"/>
<circle cx="1001.4" cy="94.9" r="2.1"/>
<circle cx="1004.2" cy="103.3" r="2.1"/>
<circle cx="1007.0" cy="99.1" r="2.1"/>
<circle cx="1008.5" cy="97.7" r="2.1"/>
<circle cx="1011.3" cy="100.5" r="2.1"/>
<circle cx="1014.1" cy="94.9" r="2.1"/>
<circle cx="1016.2" cy="93.4" r="2.1"/>
<circle cx="1017.6" cy="96.3" r="2.1"/>
<circle cx="1009.2" cy="89.9" r="2.1"/>
<circle cx="1019.0" cy="85.7" r="2.1"/>
<circle cx="1021.1" cy="76.6" r="2.1"/>
<circle cx="1022.5" cy="74.5" r="2.1"/>
<circle cx="1023.9" cy="78.0" r="2.1"/>
<circle cx="1025.3" cy="80.1" r="2.1"/>
<circle cx="1027.4" cy="47.0" r="2.1"/>
<circle cx="1028.8" cy="54.8" r="2.1"/>
<circle cx="1030.3" cy="61.1" r="2.1"/>
<circle cx="1026.7" cy="66.0" r="2.1"/>
<circle cx="1031.7" cy="76.6" r="2.1"/>
<circle cx="1033.1" cy="81.5" r="2.1"/>
<circle cx="1033.8" cy="87.8" r="2.1"/>
<circle cx="1035.2" cy="92.0" r="2.1"/>
<circle cx="1037.3" cy="93.4" r="2.1"/>
<circle cx="1038.7" cy="94.9" r="2.1"/>
<circle cx="1041.5" cy="90.6" r="2.1"/>
<circle cx="1042.9" cy="91.3" r="2.1"/>
<circle cx="1038.0" cy="79.4" r="2.1"/>
<circle cx="1040.8" cy="82.2" r="2.1"/>
<circle cx="1042.9" cy="83.6" r="2.1"/>
<circle cx="1045.0" cy="67.4" r="2.1"/>
<circle cx="1045.7" cy="75.9" r="2.1"/>
<circle cx="1047.8" cy="80.8" r="2.1"/>
<circle cx="1049.9" cy="80.1" r="2.1"/>
<circle cx="1052.1" cy="80.8" r="2.1"/>
<circle cx="1047.8" cy="88.5" r="2.1"/>
<circle cx="1053.5" cy="72.3" r="2.1"/>
<circle cx="1054.9" cy="73.8" r="2.1"/>
<circle cx="1057.0" cy="70.2" r="2.1"/>
<circle cx="1059.1" cy="75.2" r="2.1"/>
<circle cx="1061.2" cy="77.3" r="2.1"/>
<circle cx="1062.6" cy="79.4" r="2.1"/>
<circle cx="1060.5" cy="81.5" r="2.1"/>
<circle cx="1064.7" cy="84.3" r="2.1"/>
<circle cx="1066.1" cy="89.9" r="2.1"/>
<circle cx="1066.8" cy="96.3" r="2.1"/>
<circle cx="1068.2" cy="97.7" r="2.1"/>
<circle cx="1069.6" cy="104.0" r="2.1"/>
<circle cx="1071.0" cy="113.1" r="2.1"/>
<circle cx="1071.7" cy="126.5" r="2.1"/>
<circle cx="1171.7" cy="80.8" r="2.1"/>
<circle cx="1188.6" cy="74.5" r="2.1"/>
<circle cx="1191.4" cy="73.8" r="2.1"/>
<circle cx="1192.8" cy="77.3" r="2.1"/>
<circle cx="1186.5" cy="78.7" r="2.1"/>
<circle cx="1190.0" cy="82.9" r="2.1"/>
<circle cx="1187.2" cy="89.9" r="2.1"/>
<circle cx="1194.2" cy="92.7" r="2.1"/>
<circle cx="1194.9" cy="91.3" r="2.1"/>
<circle cx="1173.1" cy="93.4" r="2.1"/>
<circle cx="1166.1" cy="96.3" r="2.1"/>
<circle cx="1167.5" cy="98.4" r="2.1"/>
<circle cx="1169.6" cy="97.7" r="2.1"/>
<circle cx="1171.7" cy="100.5" r="2.1"/>
<circle cx="1173.8" cy="101.9" r="2.1"/>
<circle cx="1181.6" cy="96.3" r="2.1"/>
<circle cx="1184.4" cy="95.6" r="2.1"/>
<circle cx="1185.1" cy="97.7" r="2.1"/>
<circle cx="1168.2" cy="108.2" r="2.1"/>
<circle cx="1164.7" cy="111.7" r="2.1"/>
<circle cx="1169.6" cy="113.8" r="2.1"/>
<circle cx="1183.0" cy="111.0" r="2.1"/>
<circle cx="1175.2" cy="121.6" r="2.1"/>
<circle cx="1178.8" cy="119.5" r="2.1"/>
<circle cx="1180.2" cy="120.2" r="2.1"/>
<circle cx="1175.9" cy="124.4" r="2.1"/>
<circle cx="1176.7" cy="127.9" r="2.1"/>
<circle cx="1149.2" cy="128.6" r="2.1"/>
<circle cx="1164.0" cy="132.1" r="2.1"/>
<circle cx="1182.3" cy="134.9" r="2.1"/>
<circle cx="1179.5" cy="138.5" r="2.1"/>
<circle cx="1197.0" cy="120.2" r="2.1"/>
<circle cx="1203.4" cy="122.3" r="2.1"/>
<circle cx="1202.7" cy="125.8" r="2.1"/>
<circle cx="1202.0" cy="127.9" r="2.1"/>
<circle cx="1209.0" cy="117.4" r="2.1"/>
<circle cx="1210.4" cy="120.2" r="2.1"/>
<circle cx="1211.1" cy="123.7" r="2.1"/>
<circle cx="1196.3" cy="132.8" r="2.1"/>
<circle cx="1198.5" cy="135.6" r="2.1"/>
<circle cx="1205.5" cy="133.5" r="2.1"/>
<circle cx="1206.9" cy="134.2" r="2.1"/>
<circle cx="1206.2" cy="136.3" r="2.1"/>
<circle cx="1201.3" cy="139.9" r="2.1"/>
<circle cx="1211.8" cy="142.0" r="2.1"/>
<circle cx="1239.9" cy="109.6" r="2.1"/>
<circle cx="1240.6" cy="115.2" r="2.1"/>
<circle cx="1239.2" cy="118.8" r="2.1"/>
<circle cx="1242.8" cy="120.9" r="2.1"/>
<circle cx="1235.7" cy="129.3" r="2.1"/>
<circle cx="1237.8" cy="133.5" r="2.1"/>
<circle cx="1242.1" cy="128.6" r="2.1"/>
<circle cx="1249.1" cy="127.9" r="2.1"/>
<circle cx="1254.0" cy="128.6" r="2.1"/>
<circle cx="1251.2" cy="133.5" r="2.1"/>
<circle cx="1253.3" cy="136.3" r="2.1"/>
<circle cx="1256.8" cy="136.3" r="2.1"/>
<circle cx="1249.8" cy="139.9" r="2.1"/>
<circle cx="1246.3" cy="142.7" r="2.1"/>
<circle cx="1234.3" cy="142.7" r="2.1"/>
<circle cx="1259.6" cy="108.9" r="2.1"/>
<circle cx="1255.4" cy="114.5" r="2.1"/>
<circle cx="1258.9" cy="114.5" r="2.1"/>
<circle cx="1261.7" cy="118.8" r="2.1"/>
<circle cx="1264.6" cy="120.2" r="2.1"/>
<circle cx="1263.2" cy="122.3" r="2.1"/>
<circle cx="1258.2" cy="123.0" r="2.1"/>
<circle cx="1261.7" cy="125.1" r="2.1"/>
<circle cx="1268.8" cy="120.2" r="2.1"/>
<circle cx="1272.3" cy="120.2" r="2.1"/>
<circle cx="1270.9" cy="113.1" r="2.1"/>
<circle cx="1273.7" cy="111.7" r="2.1"/>
<circle cx="1282.8" cy="114.5" r="2.1"/>
<circle cx="1282.1" cy="123.0" r="2.1"/>
<circle cx="1280.7" cy="125.8" r="2.1"/>
<circle cx="1280.0" cy="130.7" r="2.1"/>
<circle cx="1267.4" cy="133.5" r="2.1"/>
<circle cx="1266.0" cy="134.9" r="2.1"/>
<circle cx="1275.1" cy="133.5" r="2.1"/>
<circle cx="1277.2" cy="135.6" r="2.1"/>
<circle cx="1275.8" cy="138.5" r="2.1"/>
<circle cx="1278.6" cy="140.6" r="2.1"/>
<circle cx="1142.2" cy="149.8" r="2.1"/>
<circle cx="1142.9" cy="154.8" r="2.1"/>
<circle cx="1154.9" cy="146.8" r="2.1"/>
<circle cx="1147.8" cy="159.7" r="2.1"/>
<circle cx="1138.7" cy="162.5" r="2.1"/>
<circle cx="1140.8" cy="162.5" r="2.1"/>
<circle cx="1145.7" cy="162.5" r="2.1"/>
<circle cx="1147.1" cy="164.6" r="2.1"/>
<circle cx="1149.9" cy="166.7" r="2.1"/>
<circle cx="1152.7" cy="166.0" r="2.1"/>
<circle cx="1154.1" cy="170.2" r="2.1"/>
<circle cx="1156.3" cy="169.5" r="2.1"/>
<circle cx="1144.3" cy="172.3" r="2.1"/>
<circle cx="1140.1" cy="175.9" r="2.1"/>
<circle cx="1138.0" cy="180.1" r="2.1"/>
<circle cx="1145.0" cy="178.7" r="2.1"/>
<circle cx="1150.6" cy="181.9" r="2.1"/>
<circle cx="1157.7" cy="176.6" r="2.1"/>
<circle cx="1159.8" cy="176.6" r="2.1"/>
<circle cx="1161.9" cy="175.9" r="2.1"/>
<circle cx="1158.4" cy="178.7" r="2.1"/>
<circle cx="1163.3" cy="160.8" r="2.1"/>
<circle cx="1160.2" cy="186.8" r="2.1"/>
<circle cx="1136.8" cy="190.6" r="2.1"/>
<circle cx="1152.0" cy="193.4" r="2.1"/>
<circle cx="1135.9" cy="214.5" r="2.1"/>
<circle cx="1133.8" cy="220.9" r="2.1"/>
<circle cx="1133.1" cy="226.5" r="2.1"/>
<circle cx="1135.2" cy="227.9" r="2.1"/>
<circle cx="1199.2" cy="145.6" r="2.1"/>
<circle cx="1199.9" cy="147.0" r="2.1"/>
<circle cx="1212.5" cy="142.8" r="2.1"/>
<circle cx="1213.2" cy="144.9" r="2.1"/>
<circle cx="1214.6" cy="150.5" r="2.1"/>
<circle cx="1213.9" cy="154.1" r="2.1"/>
<circle cx="1228.7" cy="148.4" r="2.1"/>
<circle cx="1229.4" cy="149.8" r="2.1"/>
<circle cx="1234.3" cy="144.2" r="2.1"/>
<circle cx="1235.0" cy="146.3" r="2.1"/>
<circle cx="1243.5" cy="144.2" r="2.1"/>
<circle cx="1247.0" cy="143.5" r="2.1"/>
<circle cx="1246.3" cy="149.8" r="2.1"/>
<circle cx="1244.9" cy="152.7" r="2.1"/>
<circle cx="1249.8" cy="140.7" r="2.1"/>
<circle cx="1221.0" cy="157.6" r="2.1"/>
<circle cx="1220.3" cy="161.1" r="2.1"/>
<circle cx="1216.7" cy="165.3" r="2.1"/>
<circle cx="1218.8" cy="166.0" r="2.1"/>
<circle cx="1223.1" cy="166.0" r="2.1"/>
<circle cx="1224.5" cy="169.5" r="2.1"/>
<circle cx="1225.2" cy="171.6" r="2.1"/>
<circle cx="1225.9" cy="161.8" r="2.1"/>
<circle cx="1227.3" cy="156.9" r="2.1"/>
<circle cx="1230.8" cy="161.1" r="2.1"/>
<circle cx="1232.9" cy="159.7" r="2.1"/>
<circle cx="1232.2" cy="166.0" r="2.1"/>
<circle cx="1230.8" cy="169.5" r="2.1"/>
<circle cx="1218.1" cy="176.6" r="2.1"/>
<circle cx="1221.7" cy="182.2" r="2.1"/>
<circle cx="1277.2" cy="140.7" r="2.1"/>
<circle cx="1077.1" cy="229.8" r="2.1"/>
<circle cx="1076.1" cy="243.8" r="2.1"/>
<circle cx="1080.2" cy="242.9" r="2.1"/>
<circle cx="1085.0" cy="241.8" r="2.1"/>
<circle cx="1080.9" cy="250.7" r="2.1"/>
<circle cx="1078.8" cy="255.4" r="2.1"/>
<circle cx="1078.1" cy="258.1" r="2.1"/>
<circle cx="1082.2" cy="256.8" r="2.1"/>
<circle cx="1084.3" cy="258.1" r="2.1"/>
<circle cx="1082.9" cy="262.9" r="2.1"/>
<circle cx="1088.4" cy="276.5" r="2.1"/>
<circle cx="1086.3" cy="279.9" r="2.1"/>
<circle cx="1089.7" cy="283.4" r="2.1"/>
<circle cx="1090.4" cy="287.4" r="2.1"/>
<circle cx="1091.8" cy="288.8" r="2.1"/>
<circle cx="1095.2" cy="290.8" r="2.1"/>
<circle cx="1087.0" cy="299.7" r="2.1"/>
<circle cx="1091.8" cy="306.8" r="2.1"/>
<circle cx="1132.0" cy="245.9" r="2.1"/>
<circle cx="1129.9" cy="250.0" r="2.1"/>
<circle cx="1131.3" cy="257.9" r="2.1"/>
<circle cx="1126.5" cy="267.0" r="2.1"/>
<circle cx="1128.6" cy="267.7" r="2.1"/>
<circle cx="1125.1" cy="273.8" r="2.1"/>
<circle cx="1127.2" cy="277.2" r="2.1"/>
<circle cx="1123.1" cy="277.9" r="2.1"/>
<circle cx="1122.4" cy="303.8" r="2.1"/>
<circle cx="1124.5" cy="302.8" r="2.1"/>
<circle cx="1093.8" cy="322.9" r="2.1"/>
<circle cx="1095.9" cy="322.9" r="2.1"/>
<circle cx="1093.8" cy="325.7" r="2.1"/>
<circle cx="1097.2" cy="330.4" r="2.1"/>
<circle cx="1098.6" cy="331.8" r="2.1"/>
<circle cx="1104.0" cy="340.7" r="2.1"/>
<circle cx="1099.3" cy="343.4" r="2.1"/>
<circle cx="1099.9" cy="344.7" r="2.1"/>
<circle cx="1104.7" cy="349.5" r="2.1"/>
<circle cx="1100.6" cy="351.6" r="2.1"/>
<circle cx="1115.6" cy="335.9" r="2.1"/>
<circle cx="1120.4" cy="338.6" r="2.1"/>
<circle cx="1119.0" cy="343.8" r="2.1"/>
<circle cx="1121.1" cy="352.0" r="2.1"/>
<circle cx="1108.1" cy="360.8" r="2.1"/>
<circle cx="1117.0" cy="361.1" r="2.1"/>
<circle cx="1118.3" cy="363.8" r="2.1"/>
<circle cx="1112.2" cy="367.9" r="2.1"/>
<circle cx="1114.3" cy="369.3" r="2.1"/>
<circle cx="1114.9" cy="369.9" r="2.1"/>
<circle cx="1102.7" cy="370.6" r="2.1"/>
<circle cx="1106.8" cy="370.6" r="2.1"/>
<circle cx="1110.2" cy="373.8" r="2.1"/>
<circle cx="1106.1" cy="377.8" r="2.1"/>
<circle cx="1110.8" cy="377.8" r="2.1"/>
<circle cx="1112.9" cy="382.9" r="2.1"/>
<circle cx="1108.8" cy="385.6" r="2.1"/>
<circle cx="1102.0" cy="396.5" r="2.1"/>
<circle cx="1073.5" cy="146.0" r="2.1"/>
<circle cx="1074.0" cy="150.0" r="2.1"/>
<circle cx="1075.0" cy="154.0" r="2.1"/>
<circle cx="957.8" cy="83.6" r="2.1"/>
<circle cx="959.9" cy="84.3" r="2.1"/>
<circle cx="964.9" cy="85.0" r="2.1"/>
<circle cx="966.3" cy="86.4" r="2.1"/>
<circle cx="968.4" cy="89.2" r="2.1"/>
<circle cx="953.6" cy="94.9" r="2.1"/>
<circle cx="950.8" cy="96.3" r="2.1"/>
<circle cx="948.7" cy="101.9" r="2.1"/>
<circle cx="945.9" cy="106.1" r="2.1"/>
<circle cx="918.4" cy="99.1" r="2.1"/>
<circle cx="921.3" cy="102.6" r="2.1"/>
<circle cx="915.6" cy="96.3" r="2.1"/>
<circle cx="926.9" cy="111.7" r="2.1"/>
<circle cx="934.6" cy="114.5" r="2.1"/>
<circle cx="939.5" cy="118.1" r="2.1"/>
<circle cx="1034.5" cy="89.9" r="2.1"/>
<circle cx="1036.6" cy="91.3" r="2.1"/>
<circle cx="1040.1" cy="92.0" r="2.1"/>
<circle cx="1043.6" cy="82.2" r="2.1"/>
<circle cx="1050.6" cy="82.2" r="2.1"/>
<circle cx="1057.7" cy="72.3" r="2.1"/>
<circle cx="1063.3" cy="80.8" r="2.1"/>
<circle cx="988.8" cy="100.5" r="2.1"/>
<circle cx="984.5" cy="115.9" r="2.1"/>
<circle cx="974.0" cy="106.1" r="2.1"/>
<circle cx="977.5" cy="115.9" r="2.1"/>
<circle cx="1011.3" cy="97.7" r="2.1"/>
<circle cx="1016.9" cy="95.6" r="2.1"/>
<circle cx="1021.1" cy="78.7" r="2.1"/>
</g>
<g shape-rendering="crispEdges">
<rect x="910" y="32" width="382" height="1" fill="#000" />
<rect x="910" y="411" width="382" height="1" fill="#000" />
<rect x="910" y="32" width="1" height="380" fill="#000" />
<rect x="1291" y="32" width="1" height="380" fill="#000" />
</g>
<g shape-rendering="crispEdges">
<rect x="1292" y="57" width="4" height="1" fill="#000" />
<rect x="1292" y="89" width="4" height="1" fill="#000" />
<rect x="1292" y="121" width="4" height="1" fill="#000" />
<rect x="1292" y="153" width="4" height="1" fill="#000" />
<rect x="1292" y="185" width="4" height="1" fill="#000" />
<rect x="1292" y="218" width="4" height="1" fill="#000" />
<rect x="1292" y="250" width="4" height="1" fill="#000" />
<rect x="1292" y="282" width="4" height="1" fill="#000" />
<rect x="1292" y="314" width="4" height="1" fill="#000" />
<rect x="1292" y="346" width="4" height="1" fill="#000" />
<rect x="1292" y="379" width="4" height="1" fill="#000" />
</g>
<text x="1297" y="61" font-size="10.3" fill="#000" textLength="32" lengthAdjust="spacingAndGlyphs"  stroke="#000" stroke-width="0.2" xml:space="preserve">1925.34</text>
<text x="1297" y="93" font-size="10.3" fill="#000" textLength="32" lengthAdjust="spacingAndGlyphs"  stroke="#000" stroke-width="0.2" xml:space="preserve">1924.17</text>
<text x="1297" y="125" font-size="10.3" fill="#000" textLength="32" lengthAdjust="spacingAndGlyphs"  stroke="#000" stroke-width="0.2" xml:space="preserve">1923.00</text>
<text x="1297" y="157" font-size="10.3" fill="#000" textLength="32" lengthAdjust="spacingAndGlyphs"  stroke="#000" stroke-width="0.2" xml:space="preserve">1921.83</text>
<text x="1297" y="189" font-size="10.3" fill="#000" textLength="32" lengthAdjust="spacingAndGlyphs"  stroke="#000" stroke-width="0.2" xml:space="preserve">1920.66</text>
<text x="1297" y="222" font-size="10.3" fill="#000" textLength="32" lengthAdjust="spacingAndGlyphs"  stroke="#000" stroke-width="0.2" xml:space="preserve">1919.49</text>
<text x="1297" y="254" font-size="10.3" fill="#000" textLength="32" lengthAdjust="spacingAndGlyphs"  stroke="#000" stroke-width="0.2" xml:space="preserve">1918.32</text>
<text x="1297" y="286" font-size="10.3" fill="#000" textLength="32" lengthAdjust="spacingAndGlyphs"  stroke="#000" stroke-width="0.2" xml:space="preserve">1917.15</text>
<text x="1297" y="318" font-size="10.3" fill="#000" textLength="32" lengthAdjust="spacingAndGlyphs"  stroke="#000" stroke-width="0.2" xml:space="preserve">1915.98</text>
<text x="1297" y="350" font-size="10.3" fill="#000" textLength="32" lengthAdjust="spacingAndGlyphs"  stroke="#000" stroke-width="0.2" xml:space="preserve">1914.81</text>
<text x="1297" y="383" font-size="10.3" fill="#000" textLength="32" lengthAdjust="spacingAndGlyphs"  stroke="#000" stroke-width="0.2" xml:space="preserve">1913.64</text>
<rect x="1293" y="110" width="41" height="11" fill="#dda0dd" />
<text x="1297" y="119" font-size="10.3" fill="#ffffff" textLength="32" lengthAdjust="spacingAndGlyphs"  stroke="#ffffff" stroke-width="0.2" xml:space="preserve">1923.21</text>
<g shape-rendering="crispEdges">
<rect x="910" y="412" width="1" height="4" fill="#000" />
<rect x="974" y="412" width="1" height="4" fill="#000" />
<rect x="1038" y="412" width="1" height="4" fill="#000" />
<rect x="1102" y="412" width="1" height="4" fill="#000" />
<rect x="1166" y="412" width="1" height="4" fill="#000" />
<rect x="1230" y="412" width="1" height="4" fill="#000" />
</g>
<text x="909.5" y="424" font-size="10.3" fill="#000" textLength="47" lengthAdjust="spacingAndGlyphs"  stroke="#000" stroke-width="0.2" xml:space="preserve">10 Jul 2023</text>
<text x="973.5" y="424" font-size="10.3" fill="#000" textLength="50" lengthAdjust="spacingAndGlyphs"  stroke="#000" stroke-width="0.2" xml:space="preserve">10 Jul 13:39</text>
<text x="1037.5" y="424" font-size="10.3" fill="#000" textLength="50" lengthAdjust="spacingAndGlyphs"  stroke="#000" stroke-width="0.2" xml:space="preserve">10 Jul 14:43</text>
<text x="1101.5" y="424" font-size="10.3" fill="#000" textLength="50" lengthAdjust="spacingAndGlyphs"  stroke="#000" stroke-width="0.2" xml:space="preserve">10 Jul 15:47</text>
<text x="1165.5" y="424" font-size="10.3" fill="#000" textLength="50" lengthAdjust="spacingAndGlyphs"  stroke="#000" stroke-width="0.2" xml:space="preserve">10 Jul 16:51</text>
<text x="1229.5" y="424" font-size="10.3" fill="#000" textLength="50" lengthAdjust="spacingAndGlyphs"  stroke="#000" stroke-width="0.2" xml:space="preserve">10 Jul 17:55</text>
<g shape-rendering="crispEdges">
<rect x="916" y="39" width="7" height="9" fill="#fff1ea" />
<rect x="923" y="39" width="6" height="9" fill="#d9f5ff" />
</g>
<path d="M922.5 38.5 H916.5 Q915.5 38.5 915.5 39.5 V47.5 Q915.5 48.5 916.5 48.5 H922.5" stroke="#b5484a" fill="none"/>
<path d="M922.5 38.5 H928.5 Q929.5 38.5 929.5 39.5 V47.5 Q929.5 48.5 928.5 48.5 H922.5" stroke="#2a5d8c" fill="none"/>
<g shape-rendering="crispEdges">
<rect x="917" y="40" width="5" height="1" fill="#b5484a" />
<rect x="923" y="40" width="5" height="1" fill="#2a5d8c" />
<rect x="917" y="43" width="5" height="1" fill="#b5484a" />
<rect x="923" y="43" width="5" height="1" fill="#2a5d8c" />
<rect x="917" y="46" width="5" height="1" fill="#b5484a" />
<rect x="923" y="46" width="5" height="1" fill="#2a5d8c" />
</g>
<path d="M936.5 38.5 H939.5 V42.5 H942.5 V48.5 H936.5 Z" stroke="#b5484a" fill="#ffd3c9" stroke-linejoin="round"/>
<path d="M950.5 38.5 H947.5 V42.5 H944.5 V48.5 H950.5 Z" stroke="#2a5d8c" fill="#bfeafc" stroke-linejoin="round"/>
<rect x="941.5" y="38.5" width="4" height="1.6" rx="0.8" stroke="#8a8a8a" stroke-width="0.9" fill="#ffffff"/>
<text x="957" y="47" font-size="10.3" fill="#000" textLength="142" lengthAdjust="spacingAndGlyphs"  stroke="#000" stroke-width="0.2" xml:space="preserve">XAUUSD, M1:  Gold vs US Dollar</text>
<text x="915" y="62" font-size="10.3" fill="#000" textLength="38" lengthAdjust="spacingAndGlyphs"  stroke="#000" stroke-width="0.2" xml:space="preserve">4%: 0.55</text>
<rect x="901" y="439" width="450" height="2" fill="#5c5c5c" />
<g shape-rendering="crispEdges">
<rect x="914" y="449" width="1" height="10" fill="#1f8f2f" />
<rect x="912" y="451" width="5" height="6" fill="#1f8f2f" />
<rect x="913" y="452" width="3" height="4" fill="#c9f7c9" />
<rect x="920" y="447" width="1" height="14" fill="#1f8f2f" />
<rect x="918" y="450" width="5" height="8" fill="#1f8f2f" />
<rect x="919" y="451" width="3" height="6" fill="#c9f7c9" />
</g>
<text x="929" y="459" font-size="12" fill="#6e6e6e" textLength="63" lengthAdjust="spacingAndGlyphs"  xml:space="preserve">XAUUSD,H1</text>
<g shape-rendering="crispEdges">
<rect x="1252" y="460" width="10" height="1" fill="#9a9a9a" />
<rect x="1288.5" y="452.5" width="9" height="9" fill="none" stroke="#9a9a9a" stroke-width="1"/>
</g>
<path d="M1324 452 L1334 462 M1334 452 L1324 462" stroke="#9a9a9a" stroke-width="1.1" fill="none"/>
<g shape-rendering="crispEdges">
<rect x="906" y="469" width="442" height="230" fill="#ffffff" />
<rect x="906" y="469" width="441" height="2" fill="#7a7a7a" />
<rect x="906" y="469" width="2" height="229" fill="#7a7a7a" />
<rect x="908" y="471" width="439" height="227" fill="#e4e4f8" />
<rect x="908" y="471" width="439" height="2" fill="#f7f7ff" />
<rect x="908" y="471" width="2" height="227" fill="#f7f7ff" />
</g>
<g shape-rendering="crispEdges">
<rect x="911" y="479" width="382" height="1" fill="#ffffff" />
<rect x="911" y="486" width="382" height="1" fill="#ffffff" />
<rect x="911" y="494" width="382" height="1" fill="#ffffff" />
<rect x="911" y="502" width="382" height="1" fill="#ffffff" />
<rect x="911" y="510" width="382" height="1" fill="#ffffff" />
<rect x="911" y="517" width="382" height="1" fill="#ffffff" />
<rect x="911" y="525" width="382" height="1" fill="#ffffff" />
<rect x="911" y="533" width="382" height="1" fill="#ffffff" />
<rect x="911" y="541" width="382" height="1" fill="#ffffff" />
<rect x="911" y="549" width="382" height="1" fill="#ffffff" />
<rect x="911" y="556" width="382" height="1" fill="#ffffff" />
<rect x="911" y="564" width="382" height="1" fill="#ffffff" />
<rect x="911" y="572" width="382" height="1" fill="#ffffff" />
<rect x="911" y="580" width="382" height="1" fill="#ffffff" />
<rect x="911" y="587" width="382" height="1" fill="#ffffff" />
<rect x="911" y="595" width="382" height="1" fill="#ffffff" />
<rect x="911" y="603" width="382" height="1" fill="#ffffff" />
<rect x="911" y="611" width="382" height="1" fill="#ffffff" />
<rect x="911" y="619" width="382" height="1" fill="#ffffff" />
<rect x="911" y="626" width="382" height="1" fill="#ffffff" />
<rect x="911" y="634" width="382" height="1" fill="#ffffff" />
<rect x="911" y="642" width="382" height="1" fill="#ffffff" />
<rect x="911" y="650" width="382" height="1" fill="#ffffff" />
<rect x="911" y="657" width="382" height="1" fill="#ffffff" />
<rect x="911" y="665" width="382" height="1" fill="#ffffff" />
</g>
<rect x="911" y="537" width="382" height="1" fill="#e0a8dc" />
<path d="M1282 474 L1291 474 L1286.5 479 Z" fill="#ffffff" opacity="0.85"/>
<g fill="#cdc2f0" opacity="0.9"><circle cx="911" cy="607.5" r="2.6"/><circle cx="921" cy="607.5" r="2.6"/><circle cx="918.5" cy="596" r="2.6"/><circle cx="918.5" cy="607" r="2.6"/><circle cx="924.5" cy="586" r="2.6"/><circle cx="924.5" cy="591" r="2.6"/><circle cx="924" cy="586.5" r="2.6"/><circle cx="927" cy="586.5" r="2.6"/><circle cx="923" cy="591.5" r="2.6"/><circle cx="924" cy="591.5" r="2.6"/><circle cx="928" cy="585.5" r="2.6"/><circle cx="930" cy="585.5" r="2.6"/><circle cx="930.5" cy="585" r="2.6"/><circle cx="930.5" cy="609" r="2.6"/><circle cx="930" cy="609.5" r="2.6"/><circle cx="933" cy="609.5" r="2.6"/><circle cx="934" cy="595.5" r="2.6"/><circle cx="939" cy="595.5" r="2.6"/><circle cx="940" cy="596.5" r="2.6"/><circle cx="942" cy="596.5" r="2.6"/><circle cx="942.5" cy="596" r="2.6"/><circle cx="942.5" cy="619" r="2.6"/><circle cx="942" cy="614.5" r="2.6"/><circle cx="945" cy="614.5" r="2.6"/><circle cx="945" cy="617.5" r="2.6"/><circle cx="947" cy="617.5" r="2.6"/><circle cx="947.5" cy="615" r="2.6"/><circle cx="947.5" cy="618" r="2.6"/><circle cx="947" cy="618.5" r="2.6"/><circle cx="950" cy="618.5" r="2.6"/><circle cx="952" cy="615.5" r="2.6"/><circle cx="957" cy="615.5" r="2.6"/><circle cx="954.5" cy="613" r="2.6"/><circle cx="954.5" cy="615" r="2.6"/><circle cx="960.5" cy="594" r="2.6"/><circle cx="960.5" cy="656" r="2.6"/><circle cx="958" cy="594.5" r="2.6"/><circle cx="960" cy="594.5" r="2.6"/><circle cx="960" cy="656.5" r="2.6"/><circle cx="963" cy="656.5" r="2.6"/><circle cx="966.5" cy="591" r="2.6"/><circle cx="966.5" cy="641" r="2.6"/><circle cx="964" cy="641.5" r="2.6"/><circle cx="966" cy="641.5" r="2.6"/><circle cx="966" cy="600.5" r="2.6"/><circle cx="968" cy="600.5" r="2.6"/><circle cx="971.5" cy="593" r="2.6"/><circle cx="971.5" cy="608" r="2.6"/><circle cx="970" cy="593.5" r="2.6"/><circle cx="972" cy="593.5" r="2.6"/><circle cx="971" cy="608.5" r="2.6"/><circle cx="974" cy="608.5" r="2.6"/><circle cx="976" cy="604.5" r="2.6"/><circle cx="979" cy="604.5" r="2.6"/><circle cx="979.5" cy="603" r="2.6"/><circle cx="979.5" cy="604" r="2.6"/><circle cx="979" cy="602.5" r="2.6"/><circle cx="982" cy="602.5" r="2.6"/><circle cx="982" cy="601.5" r="2.6"/><circle cx="985" cy="601.5" r="2.6"/><circle cx="985.5" cy="601" r="2.6"/><circle cx="985.5" cy="603" r="2.6"/><circle cx="985" cy="603.5" r="2.6"/><circle cx="987" cy="603.5" r="2.6"/><circle cx="988" cy="604.5" r="2.6"/><circle cx="992" cy="604.5" r="2.6"/><circle cx="990.5" cy="603" r="2.6"/><circle cx="990.5" cy="604" r="2.6"/><circle cx="990" cy="603.5" r="2.6"/><circle cx="993" cy="603.5" r="2.6"/><circle cx="996.5" cy="606" r="2.6"/><circle cx="996.5" cy="616" r="2.6"/><circle cx="995" cy="607.5" r="2.6"/><circle cx="997" cy="607.5" r="2.6"/><circle cx="996" cy="616.5" r="2.6"/><circle cx="999" cy="616.5" r="2.6"/><circle cx="1001.5" cy="612" r="2.6"/><circle cx="1001.5" cy="631" r="2.6"/><circle cx="1000" cy="631.5" r="2.6"/><circle cx="1002" cy="631.5" r="2.6"/><circle cx="1001" cy="612.5" r="2.6"/><circle cx="1004" cy="612.5" r="2.6"/><circle cx="1007.5" cy="587" r="2.6"/><circle cx="1007.5" cy="616" r="2.6"/><circle cx="1006" cy="616.5" r="2.6"/><circle cx="1008" cy="616.5" r="2.6"/><circle cx="1007" cy="587.5" r="2.6"/><circle cx="1011" cy="587.5" r="2.6"/><circle cx="1014.5" cy="551" r="2.6"/><circle cx="1014.5" cy="571" r="2.6"/><circle cx="1012" cy="571.5" r="2.6"/><circle cx="1014" cy="571.5" r="2.6"/><circle cx="1014" cy="551.5" r="2.6"/><circle cx="1016" cy="551.5" r="2.6"/><circle cx="1019.5" cy="551" r="2.6"/><circle cx="1019.5" cy="557" r="2.6"/><circle cx="1018" cy="557.5" r="2.6"/><circle cx="1020" cy="557.5" r="2.6"/><circle cx="1019" cy="551.5" r="2.6"/><circle cx="1022" cy="551.5" r="2.6"/><circle cx="1023" cy="555.5" r="2.6"/><circle cx="1026" cy="555.5" r="2.6"/><circle cx="1026.5" cy="555" r="2.6"/><circle cx="1026.5" cy="559" r="2.6"/><circle cx="1025" cy="559.5" r="2.6"/><circle cx="1028" cy="559.5" r="2.6"/><circle cx="1032.5" cy="564" r="2.6"/><circle cx="1032.5" cy="574" r="2.6"/><circle cx="1030" cy="564.5" r="2.6"/><circle cx="1032" cy="564.5" r="2.6"/><circle cx="1032" cy="574.5" r="2.6"/><circle cx="1035" cy="574.5" r="2.6"/><circle cx="1038.5" cy="551" r="2.6"/><circle cx="1038.5" cy="565" r="2.6"/><circle cx="1036" cy="559.5" r="2.6"/><circle cx="1038" cy="559.5" r="2.6"/><circle cx="1038" cy="565.5" r="2.6"/><circle cx="1041" cy="565.5" r="2.6"/><circle cx="1038" cy="551.5" r="2.6"/><circle cx="1039" cy="551.5" r="2.6"/><circle cx="1044.5" cy="572" r="2.6"/><circle cx="1044.5" cy="580" r="2.6"/><circle cx="1042" cy="572.5" r="2.6"/><circle cx="1044" cy="572.5" r="2.6"/><circle cx="1056.5" cy="507" r="2.6"/><circle cx="1056.5" cy="542" r="2.6"/><circle cx="1054" cy="542.5" r="2.6"/><circle cx="1056" cy="542.5" r="2.6"/><circle cx="1056" cy="507.5" r="2.6"/><circle cx="1059" cy="507.5" r="2.6"/><circle cx="1062.5" cy="522" r="2.6"/><circle cx="1062.5" cy="549" r="2.6"/><circle cx="1060" cy="522.5" r="2.6"/><circle cx="1062" cy="522.5" r="2.6"/><circle cx="1062" cy="549.5" r="2.6"/><circle cx="1065" cy="549.5" r="2.6"/><circle cx="1066" cy="546.5" r="2.6"/><circle cx="1071" cy="546.5" r="2.6"/><circle cx="1072" cy="546.5" r="2.6"/><circle cx="1077" cy="546.5" r="2.6"/><circle cx="1080.5" cy="539" r="2.6"/><circle cx="1080.5" cy="544" r="2.6"/><circle cx="1078" cy="544.5" r="2.6"/><circle cx="1081" cy="544.5" r="2.6"/><circle cx="1080" cy="538.5" r="2.6"/><circle cx="1083" cy="538.5" r="2.6"/><circle cx="1085.5" cy="518" r="2.6"/><circle cx="1085.5" cy="535" r="2.6"/><circle cx="1084" cy="532.5" r="2.6"/><circle cx="1085" cy="532.5" r="2.6"/><circle cx="1085" cy="535.5" r="2.6"/><circle cx="1087" cy="535.5" r="2.6"/><circle cx="1085" cy="518.5" r="2.6"/><circle cx="1088" cy="518.5" r="2.6"/><circle cx="1092.5" cy="508" r="2.6"/><circle cx="1092.5" cy="516" r="2.6"/><circle cx="1090" cy="516.5" r="2.6"/><circle cx="1092" cy="516.5" r="2.6"/><circle cx="1092" cy="508.5" r="2.6"/><circle cx="1095" cy="508.5" r="2.6"/><circle cx="1098.5" cy="512" r="2.6"/><circle cx="1098.5" cy="521" r="2.6"/><circle cx="1096" cy="512.5" r="2.6"/><circle cx="1098" cy="512.5" r="2.6"/><circle cx="1098" cy="521.5" r="2.6"/><circle cx="1101" cy="521.5" r="2.6"/><circle cx="1104.5" cy="515" r="2.6"/><circle cx="1104.5" cy="520" r="2.6"/><circle cx="1103" cy="515.5" r="2.6"/><circle cx="1105" cy="515.5" r="2.6"/><circle cx="1104" cy="520.5" r="2.6"/><circle cx="1107" cy="520.5" r="2.6"/><circle cx="1110.5" cy="526" r="2.6"/><circle cx="1110.5" cy="534" r="2.6"/><circle cx="1108" cy="534.5" r="2.6"/><circle cx="1110" cy="534.5" r="2.6"/><circle cx="1110" cy="526.5" r="2.6"/><circle cx="1113" cy="526.5" r="2.6"/><circle cx="1113" cy="522.5" r="2.6"/><circle cx="1115" cy="522.5" r="2.6"/><circle cx="1115" cy="521.5" r="2.6"/><circle cx="1119" cy="521.5" r="2.6"/><circle cx="1120" cy="532.5" r="2.6"/><circle cx="1125" cy="532.5" r="2.6"/><circle cx="1128.5" cy="527" r="2.6"/><circle cx="1128.5" cy="542" r="2.6"/><circle cx="1127" cy="527.5" r="2.6"/><circle cx="1129" cy="527.5" r="2.6"/><circle cx="1128" cy="542.5" r="2.6"/><circle cx="1131" cy="542.5" r="2.6"/><circle cx="1134.5" cy="512" r="2.6"/><circle cx="1134.5" cy="520" r="2.6"/><circle cx="1133" cy="520.5" r="2.6"/><circle cx="1134" cy="520.5" r="2.6"/><circle cx="1134" cy="512.5" r="2.6"/><circle cx="1136" cy="512.5" r="2.6"/><circle cx="1044.5" cy="572" r="2.6"/><circle cx="1044.5" cy="586" r="2.6"/><circle cx="1044" cy="586.5" r="2.6"/><circle cx="1047" cy="586.5" r="2.6"/><circle cx="1051.5" cy="578" r="2.6"/><circle cx="1051.5" cy="585" r="2.6"/><circle cx="1050" cy="578.5" r="2.6"/><circle cx="1051" cy="578.5" r="2.6"/><circle cx="1049" cy="584.5" r="2.6"/><circle cx="1053" cy="584.5" r="2.6"/><circle cx="1152.5" cy="560" r="2.6"/><circle cx="1152.5" cy="568" r="2.6"/><circle cx="1152" cy="568.5" r="2.6"/><circle cx="1155" cy="568.5" r="2.6"/><circle cx="1158.5" cy="567" r="2.6"/><circle cx="1158.5" cy="575" r="2.6"/><circle cx="1156" cy="567.5" r="2.6"/><circle cx="1160" cy="567.5" r="2.6"/><circle cx="1134.5" cy="512" r="2.6"/><circle cx="1134.5" cy="520" r="2.6"/><circle cx="1134" cy="512.5" r="2.6"/><circle cx="1136" cy="512.5" r="2.6"/><circle cx="1132" cy="520.5" r="2.6"/><circle cx="1134" cy="520.5" r="2.6"/><circle cx="1140.5" cy="510" r="2.6"/><circle cx="1140.5" cy="519" r="2.6"/><circle cx="1140" cy="510.5" r="2.6"/><circle cx="1142" cy="510.5" r="2.6"/><circle cx="1139" cy="519.5" r="2.6"/><circle cx="1140" cy="519.5" r="2.6"/><circle cx="1145.5" cy="528" r="2.6"/><circle cx="1145.5" cy="539" r="2.6"/><circle cx="1144" cy="528.5" r="2.6"/><circle cx="1146" cy="528.5" r="2.6"/><circle cx="1145" cy="536.5" r="2.6"/><circle cx="1148" cy="536.5" r="2.6"/><circle cx="1151.5" cy="543" r="2.6"/><circle cx="1151.5" cy="568" r="2.6"/><circle cx="1150" cy="543.5" r="2.6"/><circle cx="1152" cy="543.5" r="2.6"/><circle cx="1151" cy="568.5" r="2.6"/><circle cx="1155" cy="568.5" r="2.6"/><circle cx="1158.5" cy="567" r="2.6"/><circle cx="1158.5" cy="574" r="2.6"/><circle cx="1158" cy="567.5" r="2.6"/><circle cx="1161" cy="567.5" r="2.6"/><circle cx="1163.5" cy="554" r="2.6"/><circle cx="1163.5" cy="564" r="2.6"/><circle cx="1162" cy="564.5" r="2.6"/><circle cx="1163" cy="564.5" r="2.6"/><circle cx="1163" cy="554.5" r="2.6"/><circle cx="1166" cy="554.5" r="2.6"/><circle cx="1168" cy="556.5" r="2.6"/><circle cx="1170" cy="556.5" r="2.6"/><circle cx="1170.5" cy="556" r="2.6"/><circle cx="1170.5" cy="560" r="2.6"/><circle cx="1170" cy="560.5" r="2.6"/><circle cx="1172" cy="560.5" r="2.6"/><circle cx="1176.5" cy="549" r="2.6"/><circle cx="1176.5" cy="556" r="2.6"/><circle cx="1175" cy="549.5" r="2.6"/><circle cx="1176" cy="549.5" r="2.6"/><circle cx="1176" cy="556.5" r="2.6"/><circle cx="1178" cy="556.5" r="2.6"/><circle cx="1182.5" cy="529" r="2.6"/><circle cx="1182.5" cy="563" r="2.6"/><circle cx="1181" cy="563.5" r="2.6"/><circle cx="1182" cy="563.5" r="2.6"/><circle cx="1182" cy="529.5" r="2.6"/><circle cx="1185" cy="529.5" r="2.6"/><circle cx="1188.5" cy="521" r="2.6"/><circle cx="1188.5" cy="590" r="2.6"/><circle cx="1186" cy="521.5" r="2.6"/><circle cx="1188" cy="521.5" r="2.6"/><circle cx="1218.5" cy="575" r="2.6"/><circle cx="1218.5" cy="590" r="2.6"/><circle cx="1218" cy="575.5" r="2.6"/><circle cx="1221" cy="575.5" r="2.6"/><circle cx="1224.5" cy="570" r="2.6"/><circle cx="1224.5" cy="580" r="2.6"/><circle cx="1223" cy="580.5" r="2.6"/><circle cx="1224" cy="580.5" r="2.6"/><circle cx="1224" cy="570.5" r="2.6"/><circle cx="1227" cy="570.5" r="2.6"/><circle cx="1231.5" cy="561" r="2.6"/><circle cx="1231.5" cy="568" r="2.6"/><circle cx="1229" cy="568.5" r="2.6"/><circle cx="1231" cy="568.5" r="2.6"/><circle cx="1231" cy="561.5" r="2.6"/><circle cx="1233" cy="561.5" r="2.6"/><circle cx="1235.5" cy="500" r="2.6"/><circle cx="1235.5" cy="557" r="2.6"/><circle cx="1234" cy="557.5" r="2.6"/><circle cx="1236" cy="557.5" r="2.6"/><circle cx="1240" cy="518.5" r="2.6"/><circle cx="1244" cy="518.5" r="2.6"/><circle cx="1244.5" cy="518" r="2.6"/><circle cx="1244.5" cy="521" r="2.6"/><circle cx="1248.5" cy="522" r="2.6"/><circle cx="1248.5" cy="530" r="2.6"/><circle cx="1247" cy="530.5" r="2.6"/><circle cx="1250" cy="530.5" r="2.6"/><circle cx="1246" cy="522.5" r="2.6"/><circle cx="1248" cy="522.5" r="2.6"/><circle cx="1254.5" cy="523" r="2.6"/><circle cx="1254.5" cy="533" r="2.6"/><circle cx="1254" cy="533.5" r="2.6"/><circle cx="1257" cy="533.5" r="2.6"/><circle cx="1253" cy="523.5" r="2.6"/><circle cx="1255" cy="523.5" r="2.6"/><circle cx="1259.5" cy="528" r="2.6"/><circle cx="1259.5" cy="534" r="2.6"/><circle cx="1188.5" cy="570" r="2.6"/><circle cx="1188.5" cy="612" r="2.6"/><circle cx="1188" cy="591.5" r="2.6"/><circle cx="1191" cy="591.5" r="2.6"/><circle cx="1187" cy="611.5" r="2.6"/><circle cx="1189" cy="611.5" r="2.6"/><circle cx="1194.5" cy="590" r="2.6"/><circle cx="1194.5" cy="606" r="2.6"/><circle cx="1192" cy="606.5" r="2.6"/><circle cx="1194" cy="606.5" r="2.6"/><circle cx="1194" cy="596.5" r="2.6"/><circle cx="1197" cy="596.5" r="2.6"/><circle cx="1194" cy="590.5" r="2.6"/><circle cx="1196" cy="590.5" r="2.6"/><circle cx="1199" cy="591.5" r="2.6"/><circle cx="1200" cy="591.5" r="2.6"/><circle cx="1200.5" cy="591" r="2.6"/><circle cx="1200.5" cy="594" r="2.6"/><circle cx="1200" cy="594.5" r="2.6"/><circle cx="1203" cy="594.5" r="2.6"/><circle cx="1205" cy="591.5" r="2.6"/><circle cx="1207" cy="591.5" r="2.6"/><circle cx="1207" cy="589.5" r="2.6"/><circle cx="1209" cy="589.5" r="2.6"/><circle cx="1210" cy="591.5" r="2.6"/><circle cx="1215" cy="591.5" r="2.6"/><circle cx="1218.5" cy="576" r="2.6"/><circle cx="1218.5" cy="591" r="2.6"/><circle cx="1216" cy="591.5" r="2.6"/><circle cx="1218" cy="591.5" r="2.6"/><circle cx="1218" cy="576.5" r="2.6"/><circle cx="1221" cy="576.5" r="2.6"/><circle cx="1224.5" cy="570" r="2.6"/><circle cx="1224.5" cy="580" r="2.6"/><circle cx="1222" cy="580.5" r="2.6"/><circle cx="1224" cy="580.5" r="2.6"/><circle cx="1224" cy="570.5" r="2.6"/><circle cx="1227" cy="570.5" r="2.6"/><circle cx="1278.5" cy="570" r="2.6"/><circle cx="1278.5" cy="578" r="2.6"/><circle cx="1278" cy="578.5" r="2.6"/><circle cx="1281" cy="578.5" r="2.6"/><circle cx="1236.5" cy="490" r="2.6"/><circle cx="1236.5" cy="557" r="2.6"/><circle cx="1236" cy="490.5" r="2.6"/><circle cx="1239" cy="490.5" r="2.6"/><circle cx="1234" cy="557.5" r="2.6"/><circle cx="1236" cy="557.5" r="2.6"/><circle cx="1240" cy="518.5" r="2.6"/><circle cx="1243" cy="518.5" r="2.6"/><circle cx="1243.5" cy="518" r="2.6"/><circle cx="1243.5" cy="521" r="2.6"/><circle cx="1243" cy="521.5" r="2.6"/><circle cx="1245" cy="521.5" r="2.6"/><circle cx="1248.5" cy="523" r="2.6"/><circle cx="1248.5" cy="530" r="2.6"/><circle cx="1246" cy="523.5" r="2.6"/><circle cx="1248" cy="523.5" r="2.6"/><circle cx="1248" cy="530.5" r="2.6"/><circle cx="1251" cy="530.5" r="2.6"/><circle cx="1254.5" cy="524" r="2.6"/><circle cx="1254.5" cy="533" r="2.6"/><circle cx="1252" cy="524.5" r="2.6"/><circle cx="1254" cy="524.5" r="2.6"/><circle cx="1254" cy="533.5" r="2.6"/><circle cx="1257" cy="533.5" r="2.6"/><circle cx="1260.5" cy="529" r="2.6"/><circle cx="1260.5" cy="534" r="2.6"/><circle cx="1258" cy="529.5" r="2.6"/><circle cx="1260" cy="529.5" r="2.6"/><circle cx="1260" cy="534.5" r="2.6"/><circle cx="1263" cy="534.5" r="2.6"/><circle cx="1266.5" cy="536" r="2.6"/><circle cx="1266.5" cy="550" r="2.6"/><circle cx="1266" cy="536.5" r="2.6"/><circle cx="1269" cy="536.5" r="2.6"/><circle cx="1264" cy="546.5" r="2.6"/><circle cx="1266" cy="546.5" r="2.6"/><circle cx="1272.5" cy="529" r="2.6"/><circle cx="1272.5" cy="537" r="2.6"/><circle cx="1270" cy="529.5" r="2.6"/><circle cx="1273" cy="529.5" r="2.6"/><circle cx="1272" cy="537.5" r="2.6"/><circle cx="1275" cy="537.5" r="2.6"/><circle cx="1278.5" cy="531" r="2.6"/><circle cx="1278.5" cy="578" r="2.6"/><circle cx="1276" cy="531.5" r="2.6"/><circle cx="1278" cy="531.5" r="2.6"/><circle cx="1276" cy="535.5" r="2.6"/><circle cx="1278" cy="535.5" r="2.6"/><circle cx="1278" cy="578.5" r="2.6"/><circle cx="1281" cy="578.5" r="2.6"/></g><g fill="#c4bdee"><circle cx="1282.2" cy="536.9" r="2.2"/><circle cx="1285.9" cy="536.9" r="2.2"/><circle cx="1284.7" cy="539.3" r="2.2"/><circle cx="1284" cy="542.4" r="2.2"/><circle cx="1288" cy="536" r="2.2"/></g><path d="M911 607.5H921M918.5 596V607M924.5 586V591M924 586.5H927M923 591.5H924M928 585.5H930M930.5 585V609M930 609.5H933M934 595.5H939M940 596.5H942M942.5 596V619M942 614.5H945M945 617.5H947M947.5 615V618M947 618.5H950M952 615.5H957M954.5 613V615M960.5 594V656M958 594.5H960M960 656.5H963M966.5 591V641M964 641.5H966M966 600.5H968M971.5 593V608M970 593.5H972M971 608.5H974M976 604.5H979M979.5 603V604M979 602.5H982M982 601.5H985M985.5 601V603M985 603.5H987M988 604.5H992M990.5 603V604M990 603.5H993M996.5 606V616M995 607.5H997M996 616.5H999M1001.5 612V631M1000 631.5H1002M1001 612.5H1004M1007.5 587V616M1006 616.5H1008M1007 587.5H1011M1014.5 551V571M1012 571.5H1014M1014 551.5H1016M1019.5 551V557M1018 557.5H1020M1019 551.5H1022M1023 555.5H1026M1026.5 555V559M1025 559.5H1028M1032.5 564V574M1030 564.5H1032M1032 574.5H1035M1038.5 551V565M1036 559.5H1038M1038 565.5H1041M1038 551.5H1039M1044.5 572V580M1042 572.5H1044M1056.5 507V542M1054 542.5H1056M1056 507.5H1059M1062.5 522V549M1060 522.5H1062M1062 549.5H1065M1066 546.5H1071M1072 546.5H1077M1080.5 539V544M1078 544.5H1081M1080 538.5H1083M1085.5 518V535M1084 532.5H1085M1085 535.5H1087M1085 518.5H1088M1092.5 508V516M1090 516.5H1092M1092 508.5H1095M1098.5 512V521M1096 512.5H1098M1098 521.5H1101M1104.5 515V520M1103 515.5H1105M1104 520.5H1107M1110.5 526V534M1108 534.5H1110M1110 526.5H1113M1113 522.5H1115M1115 521.5H1119M1120 532.5H1125M1128.5 527V542M1127 527.5H1129M1128 542.5H1131M1134.5 512V520M1133 520.5H1134M1134 512.5H1136M1044.5 572V586M1044 586.5H1047M1051.5 578V585M1050 578.5H1051M1049 584.5H1053M1152.5 560V568M1152 568.5H1155M1158.5 567V575M1156 567.5H1160M1134.5 512V520M1134 512.5H1136M1132 520.5H1134M1140.5 510V519M1140 510.5H1142M1139 519.5H1140M1145.5 528V539M1144 528.5H1146M1145 536.5H1148M1151.5 543V568M1150 543.5H1152M1151 568.5H1155M1158.5 567V574M1158 567.5H1161M1163.5 554V564M1162 564.5H1163M1163 554.5H1166M1168 556.5H1170M1170.5 556V560M1170 560.5H1172M1176.5 549V556M1175 549.5H1176M1176 556.5H1178M1182.5 529V563M1181 563.5H1182M1182 529.5H1185M1188.5 521V590M1186 521.5H1188M1218.5 575V590M1218 575.5H1221M1224.5 570V580M1223 580.5H1224M1224 570.5H1227M1231.5 561V568M1229 568.5H1231M1231 561.5H1233M1235.5 500V557M1234 557.5H1236M1240 518.5H1244M1244.5 518V521M1248.5 522V530M1247 530.5H1250M1246 522.5H1248M1254.5 523V533M1254 533.5H1257M1253 523.5H1255M1259.5 528V534M1188.5 570V612M1188 591.5H1191M1187 611.5H1189M1194.5 590V606M1192 606.5H1194M1194 596.5H1197M1194 590.5H1196M1199 591.5H1200M1200.5 591V594M1200 594.5H1203M1205 591.5H1207M1207 589.5H1209M1210 591.5H1215M1218.5 576V591M1216 591.5H1218M1218 576.5H1221M1224.5 570V580M1222 580.5H1224M1224 570.5H1227M1278.5 570V578M1278 578.5H1281M1236.5 490V557M1236 490.5H1239M1234 557.5H1236M1240 518.5H1243M1243.5 518V521M1243 521.5H1245M1248.5 523V530M1246 523.5H1248M1248 530.5H1251M1254.5 524V533M1252 524.5H1254M1254 533.5H1257M1260.5 529V534M1258 529.5H1260M1260 534.5H1263M1266.5 536V550M1266 536.5H1269M1264 546.5H1266M1272.5 529V537M1270 529.5H1273M1272 537.5H1275M1278.5 531V578M1276 531.5H1278M1276 535.5H1278M1278 578.5H1281" stroke="#600a72" stroke-width="1.8" stroke-linecap="square" fill="none"/>
<g shape-rendering="crispEdges">
<rect x="910" y="473" width="384" height="1" fill="#000" />
<rect x="910" y="676" width="384" height="1" fill="#000" />
<rect x="910" y="473" width="1" height="204" fill="#000" />
<rect x="1293" y="473" width="1" height="204" fill="#000" />
</g>
<g shape-rendering="crispEdges">
<rect x="1294" y="484" width="4" height="1" fill="#000" />
<rect x="1294" y="516" width="4" height="1" fill="#000" />
<rect x="1294" y="548" width="4" height="1" fill="#000" />
<rect x="1294" y="580" width="4" height="1" fill="#000" />
<rect x="1294" y="612" width="4" height="1" fill="#000" />
<rect x="1294" y="644" width="4" height="1" fill="#000" />
</g>
<text x="1299" y="488" font-size="10.3" fill="#000" textLength="32" lengthAdjust="spacingAndGlyphs"  stroke="#000" stroke-width="0.2" xml:space="preserve">1935.32</text>
<text x="1299" y="520" font-size="10.3" fill="#000" textLength="32" lengthAdjust="spacingAndGlyphs"  stroke="#000" stroke-width="0.2" xml:space="preserve">1928.03</text>
<text x="1299" y="552" font-size="10.3" fill="#000" textLength="32" lengthAdjust="spacingAndGlyphs"  stroke="#000" stroke-width="0.2" xml:space="preserve">1920.74</text>
<text x="1299" y="584" font-size="10.3" fill="#000" textLength="32" lengthAdjust="spacingAndGlyphs"  stroke="#000" stroke-width="0.2" xml:space="preserve">1913.45</text>
<text x="1299" y="616" font-size="10.3" fill="#000" textLength="32" lengthAdjust="spacingAndGlyphs"  stroke="#000" stroke-width="0.2" xml:space="preserve">1906.16</text>
<text x="1299" y="648" font-size="10.3" fill="#000" textLength="32" lengthAdjust="spacingAndGlyphs"  stroke="#000" stroke-width="0.2" xml:space="preserve">1898.87</text>
<rect x="1296" y="532" width="40" height="11" fill="#dda0dd" />
<text x="1299.5" y="541" font-size="10.3" fill="#ffffff" textLength="32" lengthAdjust="spacingAndGlyphs"  stroke="#ffffff" stroke-width="0.2" xml:space="preserve">1923.21</text>
<g shape-rendering="crispEdges">
<rect x="910" y="677" width="1" height="4" fill="#000" />
<rect x="974" y="677" width="1" height="4" fill="#000" />
<rect x="1038" y="677" width="1" height="4" fill="#000" />
<rect x="1102" y="677" width="1" height="4" fill="#000" />
<rect x="1166" y="677" width="1" height="4" fill="#000" />
<rect x="1230" y="677" width="1" height="4" fill="#000" />
</g>
<text x="909.5" y="689" font-size="10.3" fill="#000" textLength="50" lengthAdjust="spacingAndGlyphs"  stroke="#000" stroke-width="0.2" xml:space="preserve">28 Jun 2023</text>
<text x="973.5" y="689" font-size="10.3" fill="#000" textLength="53" lengthAdjust="spacingAndGlyphs"  stroke="#000" stroke-width="0.2" xml:space="preserve">29 Jun 21:00</text>
<text x="1037.5" y="689" font-size="10.3" fill="#000" textLength="45" lengthAdjust="spacingAndGlyphs"  stroke="#000" stroke-width="0.2" xml:space="preserve">3 Jul 07:00</text>
<text x="1101.5" y="689" font-size="10.3" fill="#000" textLength="45" lengthAdjust="spacingAndGlyphs"  stroke="#000" stroke-width="0.2" xml:space="preserve">4 Jul 16:00</text>
<text x="1165.5" y="689" font-size="10.3" fill="#000" textLength="45" lengthAdjust="spacingAndGlyphs"  stroke="#000" stroke-width="0.2" xml:space="preserve">6 Jul 04:00</text>
<text x="1229.5" y="689" font-size="10.3" fill="#000" textLength="45" lengthAdjust="spacingAndGlyphs"  stroke="#000" stroke-width="0.2" xml:space="preserve">7 Jul 13:00</text>
<g shape-rendering="crispEdges">
<rect x="916" y="480" width="7" height="9" fill="#fff1ea" />
<rect x="923" y="480" width="6" height="9" fill="#d9f5ff" />
</g>
<path d="M922.5 479.5 H916.5 Q915.5 479.5 915.5 480.5 V488.5 Q915.5 489.5 916.5 489.5 H922.5" stroke="#b5484a" fill="none"/>
<path d="M922.5 479.5 H928.5 Q929.5 479.5 929.5 480.5 V488.5 Q929.5 489.5 928.5 489.5 H922.5" stroke="#2a5d8c" fill="none"/>
<g shape-rendering="crispEdges">
<rect x="917" y="481" width="5" height="1" fill="#b5484a" />
<rect x="923" y="481" width="5" height="1" fill="#2a5d8c" />
<rect x="917" y="484" width="5" height="1" fill="#b5484a" />
<rect x="923" y="484" width="5" height="1" fill="#2a5d8c" />
<rect x="917" y="487" width="5" height="1" fill="#b5484a" />
<rect x="923" y="487" width="5" height="1" fill="#2a5d8c" />
</g>
<path d="M936.5 479.5 H939.5 V483.5 H942.5 V489.5 H936.5 Z" stroke="#b5484a" fill="#ffd3c9" stroke-linejoin="round"/>
<path d="M950.5 479.5 H947.5 V483.5 H944.5 V489.5 H950.5 Z" stroke="#2a5d8c" fill="#bfeafc" stroke-linejoin="round"/>
<rect x="941.5" y="479.5" width="4" height="1.6" rx="0.8" stroke="#8a8a8a" stroke-width="0.9" fill="#ffffff"/>
<text x="957" y="488" font-size="10.3" fill="#000" textLength="141" lengthAdjust="spacingAndGlyphs"  stroke="#000" stroke-width="0.2" xml:space="preserve">XAUUSD, H1:  Gold vs US Dollar</text>
<g shape-rendering="crispEdges">
<rect x="0" y="704" width="1351" height="1" fill="#5c5c5c" />
<rect x="0" y="705" width="1351" height="2" fill="#ffffff" />
<rect x="0" y="707" width="1351" height="1" fill="#000" />
<rect x="0" y="708" width="1351" height="18" fill="#f0f0f0" />
<rect x="0" y="726" width="1351" height="1" fill="#e2e2e2" />
<rect x="0" y="727" width="1351" height="7" fill="#f7f7f7" />
<rect x="90" y="707" width="92" height="19" fill="#000" />
<rect x="91" y="707" width="90" height="18" fill="#ffffff" />
</g>
<text x="13" y="722" font-size="12" fill="#707070" textLength="63" lengthAdjust="spacingAndGlyphs"  xml:space="preserve">XAUUSD,M1</text>
<text x="100" y="722" font-size="12" fill="#000" textLength="71" lengthAdjust="spacingAndGlyphs"  xml:space="preserve">XAUUSD,M15</text>
<text x="193" y="722" font-size="12" fill="#858585" textLength="62" lengthAdjust="spacingAndGlyphs"  xml:space="preserve">XAUUSD,H1</text>
<rect x="267" y="712" width="1" height="11" fill="#707070" />
<text x="279" y="722" font-size="12" fill="#858585" textLength="73" lengthAdjust="spacingAndGlyphs"  xml:space="preserve">XAUUSD,Daily</text>
<path d="M1320 714 L1316 717 L1320 720 Z" fill="#b0b0b0"/><path d="M1338 714 L1342 717 L1338 720 Z" fill="#b0b0b0"/>
<g style="mix-blend-mode:multiply" fill="#44d0ff">
<path d="M186 710 Q230 708 290 710 Q330 709 369 709 Q371 712 370 718 L369 729 Q330 731 290 731 Q240 732 196 733 Q186 733 185 728 Z"/>
<path d="M907 436 L919 436 L919 447.5 L913 447.5 Q906 448 905.5 456 L905.5 470 Q903 472 900 470 L900 444 Q900 436 907 436 Z"/>
<path d="M1324 436 L1343 436 Q1349 436 1349 442 L1349 463 L1342.5 463 L1342.5 448 L1324 448 Z"/>
<path d="M901 677 L905 677 L905 691 Q906 697 912 697.5 L928 697.5 L928 709.5 L909 709.5 Q901 709 901 700 Z"/>
<path d="M1346 678 L1351 678 L1351 704 Q1349 708 1340 708 L1325 707 L1325 694 Q1333 694 1340 696 Q1345 695 1346 690 Z"/>
</g>

</svg></body></html>
